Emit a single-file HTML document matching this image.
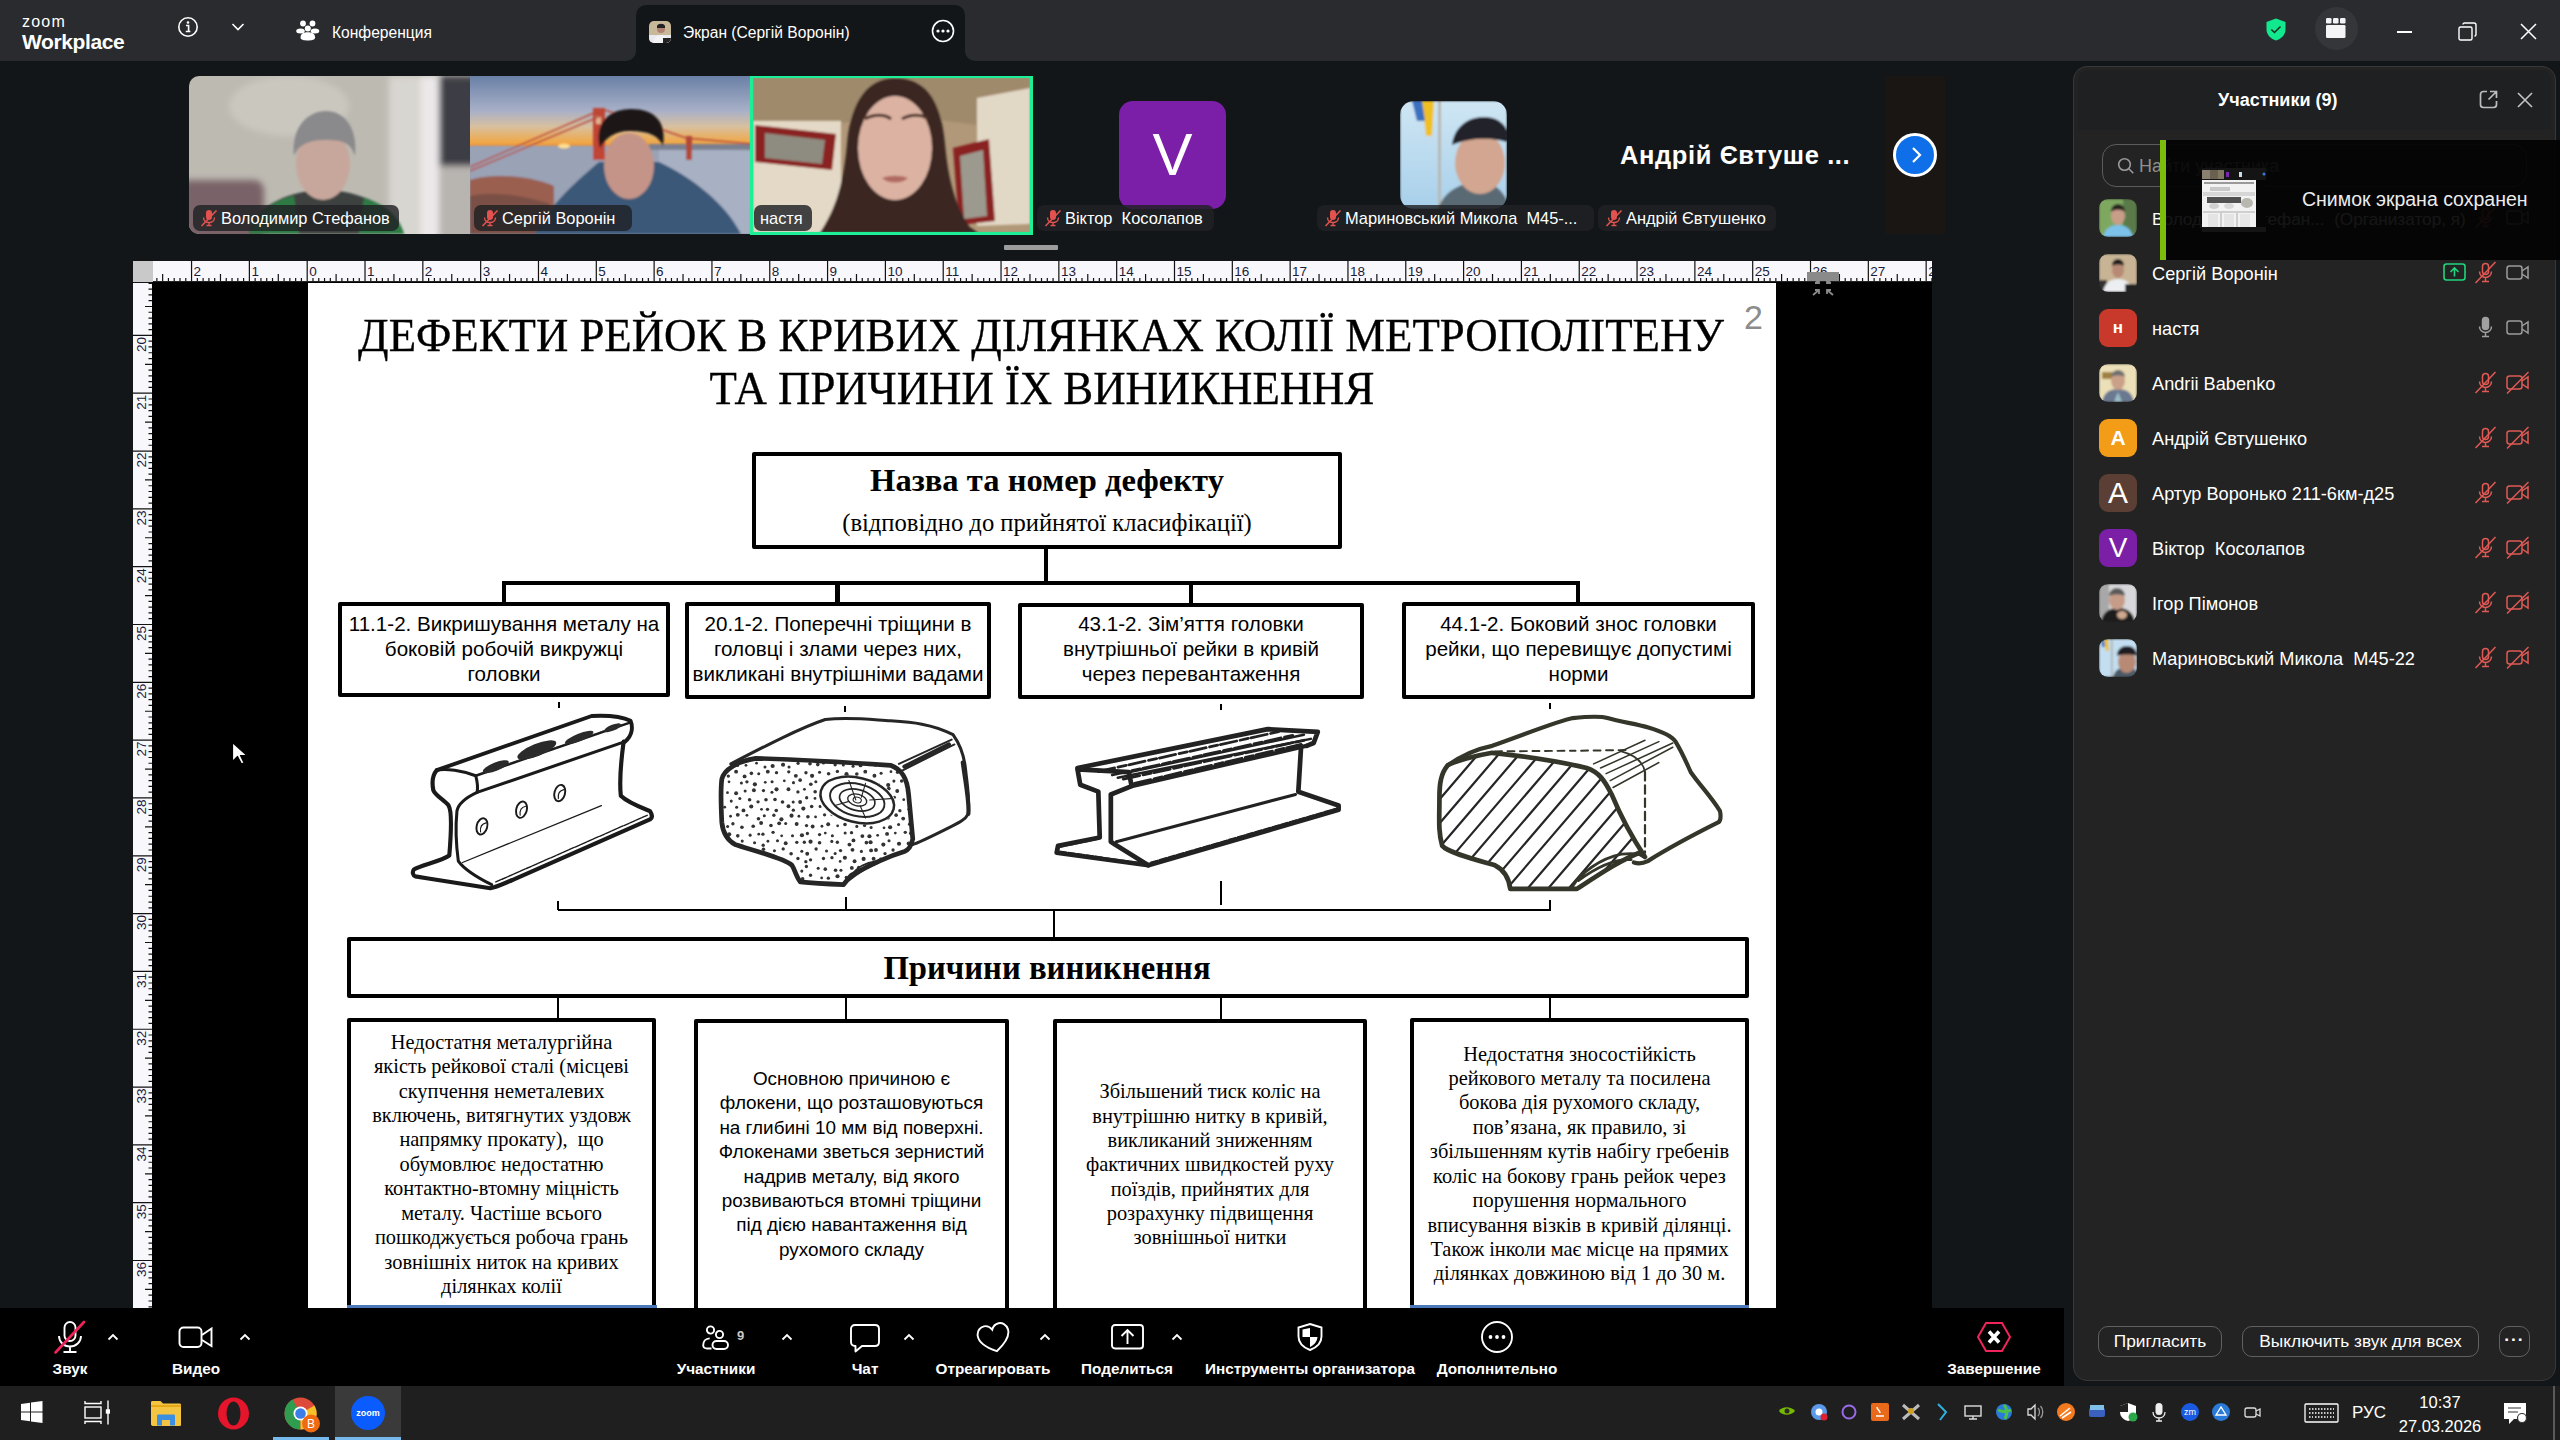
<!DOCTYPE html>
<html><head><meta charset="utf-8">
<style>
*{margin:0;padding:0;box-sizing:border-box}
html,body{width:2560px;height:1440px;overflow:hidden;background:#131619;font-family:"Liberation Sans",sans-serif;color:#fff}
.a{position:absolute}
#top{left:0;top:0;width:2560px;height:61px;background:#2a2b2e}
#tab2{left:636px;top:5px;width:329px;height:56px;background:#1e1f22;border-radius:10px 10px 0 0}
#doc{left:152px;top:282px;width:1780px;height:1026px;background:#000}
#page{left:308px;top:283px;width:1468px;height:1025px;background:#fff;overflow:hidden}
#hr{left:133px;top:261px;width:1799px;height:21px;background:#f8f7fc}
#vr{left:133px;top:283px;width:19px;height:1025px;background:#f8f7fc}
#corner{left:133px;top:261px;width:20px;height:21px;background:#c9c9c9}
#tool{left:0;top:1308px;width:2064px;height:78px;background:#000}
#task{left:0;top:1386px;width:2560px;height:54px;background:#1f1f1f}
#panel{left:2073px;top:66px;width:483px;height:1315px;background:#232323;border:1.5px solid #383838;border-radius:14px}
.serif{font-family:"Liberation Serif",serif;color:#000}
.box{position:absolute;border:4px solid #000;background:#fff;border-radius:2px}
.ln{position:absolute;background:#000}

.pill{height:26px;border-radius:7px;background:rgba(32,33,36,0.82);font:16.4px 'Liberation Sans';color:#fff;line-height:26px;padding-left:28px;white-space:nowrap;overflow:hidden}
.mm{position:absolute;left:7px;top:4px}
.btn{height:31px;border:1.5px solid #606060;border-radius:10px;font:17.3px 'Liberation Sans';color:#fff;text-align:center;line-height:28px;white-space:nowrap}
</style></head><body>

<div class="a" id="top"></div>
<!-- tab flare -->
<div class="a" style="left:626px;top:51px;width:10px;height:10px;background:#131619"></div>
<div class="a" style="left:626px;top:51px;width:10px;height:10px;background:#2a2b2e;border-radius:0 0 10px 0"></div>
<div class="a" style="left:965px;top:51px;width:10px;height:10px;background:#131619"></div>
<div class="a" style="left:965px;top:51px;width:10px;height:10px;background:#2a2b2e;border-radius:0 0 0 10px"></div>
<div class="a" style="left:636px;top:5px;width:329px;height:57px;background:#131619;border-radius:10px 10px 0 0"></div>
<!-- zoom logo -->
<div class="a" style="left:22px;top:13px;font:16px 'Liberation Sans';letter-spacing:1.2px;color:#fff">zoom</div>
<div class="a" style="left:22px;top:30px;font:bold 21px 'Liberation Sans';letter-spacing:-0.4px;color:#fff">Workplace</div>
<!-- info icon -->
<svg class="a" style="left:177px;top:16px" width="22" height="22" viewBox="0 0 22 22"><circle cx="11" cy="11" r="9.2" fill="none" stroke="#fff" stroke-width="1.6"/><circle cx="11" cy="6.5" r="1.3" fill="#fff"/><path d="M9 9.5h2.6v6M8.8 15.5h4.6" stroke="#fff" stroke-width="1.6" fill="none"/></svg>
<svg class="a" style="left:231px;top:22px" width="14" height="10" viewBox="0 0 14 10"><path d="M1.5 2l5.5 5.5L12.5 2" stroke="#fff" stroke-width="1.6" fill="none"/></svg>
<!-- people icon -->
<svg class="a" style="left:296px;top:19px" width="24" height="24" viewBox="0 0 24 24" fill="#fff"><circle cx="7" cy="4.5" r="2.9"/><circle cx="16.5" cy="4.5" r="2.9"/><circle cx="11.8" cy="9.5" r="3"/><ellipse cx="4.5" cy="12" rx="4.3" ry="2.5"/><ellipse cx="19" cy="12" rx="4.3" ry="2.5"/><path d="M4.5 18.5c0-4 3.5-5.2 7.3-5.2s7.3 1.2 7.3 5.2c0 2.2-3.2 3-7.3 3s-7.3-.8-7.3-3z"/></svg>
<div class="a" style="left:332px;top:24px;font:15.6px 'Liberation Sans';color:#fff">Конференция</div>
<!-- tab content -->
<svg class="a" style="left:649px;top:21px" width="22" height="22" viewBox="0 0 22 22"><defs><clipPath id="ct"><rect width="22" height="22" rx="5"/></clipPath></defs><g clip-path="url(#ct)"><rect width="22" height="22" fill="#c8b89a"/><rect y="14" width="22" height="8" fill="#e8e8ee"/><circle cx="12" cy="8" r="4" fill="#b08070"/><path d="M8 5c1-3 7-3 8 0v2H8z" fill="#222"/><path d="M4 22c1-6 5-8 8-8s7 2 8 8z" fill="#f2f2f4"/><rect x="14" y="17" width="8" height="5" fill="#222"/></g></svg>
<div class="a" style="left:683px;top:24px;font:15.6px 'Liberation Sans';color:#fff">Экран (Сергій Воронін)</div>
<svg class="a" style="left:931px;top:19px" width="24" height="24" viewBox="0 0 24 24"><circle cx="12" cy="12" r="10.5" fill="none" stroke="#fff" stroke-width="1.6"/><circle cx="7" cy="12" r="1.6" fill="#fff"/><circle cx="12" cy="12" r="1.6" fill="#fff"/><circle cx="17" cy="12" r="1.6" fill="#fff"/></svg>
<!-- right icons -->
<svg class="a" style="left:2265px;top:18px" width="22" height="23" viewBox="0 0 22 23"><path d="M11 0.5L20.5 4v7.5c0 5.5-4.5 9.5-9.5 11-5-1.5-9.5-5.5-9.5-11V4z" fill="#12e98e"/><path d="M6.3 11.5l3.2 3 6-6" stroke="#1d2a24" stroke-width="1.6" fill="none"/></svg>
<div class="a" style="left:2315px;top:7px;width:43px;height:43px;border-radius:50%;background:#35363a"></div>
<svg class="a" style="left:2325px;top:17px" width="22" height="22" viewBox="0 0 22 22" fill="#f4f4f6"><rect x="1" y="1" width="5.5" height="5.5" rx="1.3"/><rect x="8" y="1" width="5.5" height="5.5" rx="1.3"/><rect x="15" y="1" width="5.5" height="5.5" rx="1.3"/><rect x="1" y="8" width="19.5" height="13" rx="1.3"/></svg>
<div class="a" style="left:2397px;top:31px;width:15px;height:1.6px;background:#fff"></div>
<svg class="a" style="left:2458px;top:22px" width="19" height="19" viewBox="0 0 19 19"><rect x="1" y="5" width="13" height="13" rx="1.5" fill="none" stroke="#fff" stroke-width="1.4"/><path d="M5 2.5c0-1 .5-1.5 1.5-1.5h9.5c1 0 2 1 2 2v9.5c0 1-.5 1.5-1.5 1.5" fill="none" stroke="#fff" stroke-width="1.4"/></svg>
<svg class="a" style="left:2520px;top:23px" width="17" height="17" viewBox="0 0 17 17"><path d="M1 1l15 15M16 1L1 16" stroke="#fff" stroke-width="1.5"/></svg>


<!-- VIDEO STRIP -->
<svg class="a" style="left:189px;top:76px" width="844" height="159" viewBox="0 0 844 159">
<defs>
<clipPath id="c1"><path d="M10 0H281V158H10A10 10 0 0 1 0 148V10A10 10 0 0 1 10 0z"/></clipPath>
<clipPath id="c2"><rect x="281" y="0" width="281" height="158"/></clipPath>
<clipPath id="c3"><rect x="564" y="1" width="277" height="156"/></clipPath>
<filter id="bl"><feGaussianBlur stdDeviation="3"/></filter>
<filter id="bl2"><feGaussianBlur stdDeviation="1.2"/></filter>
<linearGradient id="sky" x1="0" y1="0" x2="0" y2="1"><stop offset="0" stop-color="#6a80a6"/><stop offset="0.22" stop-color="#a8b0c8"/><stop offset="0.32" stop-color="#d8c0a0"/><stop offset="0.42" stop-color="#f0a848"/><stop offset="0.445" stop-color="#e89040"/><stop offset="0.45" stop-color="#9aa2b6"/><stop offset="1" stop-color="#8a98b0"/></linearGradient>
</defs>
<g clip-path="url(#c1)">
 <rect width="281" height="158" fill="#bdbab2"/>
 <g filter="url(#bl)">
  <rect x="-10" y="104" width="85" height="70" rx="10" fill="#7a6468"/>
  <rect x="200" y="0" width="45" height="170" fill="#d8d6d0"/>
  <rect x="232" y="0" width="18" height="170" fill="#ece8ea"/>
  <rect x="250" y="0" width="40" height="90" fill="#3c3c44"/>
  <rect x="250" y="90" width="40" height="80" fill="#b8b4b0"/>
  <ellipse cx="100" cy="30" rx="60" ry="30" fill="#cac7bf"/>
 </g>
 <g filter="url(#bl2)">
  <path d="M60 158c6-30 40-42 75-45c35 3 70 15 80 45z" fill="#3e4240"/>
  <path d="M60 158c8-25 30-35 45-38l5 38z" fill="#2f7a45"/>
  <path d="M215 158c-6-22-25-32-40-36l-5 36z" fill="#2f7a45"/>
  <ellipse cx="134" cy="88" rx="27" ry="36" fill="#c7a79b"/>
  <path d="M105 80c-3-30 15-45 32-45s32 15 29 45c-4-12-10-16-29-16s-28 6-32 16z" fill="#8a8a8c"/>
 </g>
</g>
<g clip-path="url(#c2)">
 <rect x="281" y="0" width="281" height="158" fill="url(#sky)"/>
 <g filter="url(#bl2)">
  <rect x="281" y="70" width="281" height="88" fill="#9aa2b6"/>
  <rect x="470" y="72" width="92" height="86" fill="#a8b0c4"/>
  <rect x="460" y="68" width="102" height="6" fill="#7a8090"/>
  <ellipse cx="375" cy="70" rx="6" ry="2.5" fill="#ffe090"/>
  <path d="M281 104c20-6 55-6 84 6v48h-84z" fill="#9a5e50"/>
  <path d="M281 120c20-4 50-2 80 8v30h-80z" fill="#7a5044"/>
  <rect x="404" y="32" width="12" height="52" fill="#c04434"/>
  <rect x="407" y="40" width="5" height="8" fill="#e0b090"/>
  <rect x="497" y="60" width="6" height="24" fill="#b04838"/>
  <path d="M281 91L414 33M281 95L414 39M416 34L497 62L562 68" stroke="#b84a3a" stroke-width="1.4" fill="none"/>
  <path d="M346 158c14-28 40-52 64-72h60c30 14 65 39 82 72z" fill="#3b5878"/>
  <ellipse cx="440" cy="90" rx="25" ry="33" fill="#c49488"/>
  <path d="M411 72c-6-25 9-39 31-39c23 0 36 12 32 37c-4-10-14-15-33-15c-15 0-25 7-30 17z" fill="#1c1818"/>
 </g>
</g>
<g clip-path="url(#c3)">
 <rect x="564" y="0" width="277" height="158" fill="#b09878"/>
 <g filter="url(#bl2)">
  <path d="M564 0h277v60c-60-15-140-25-200-10l-77 5z" fill="#a08a6c"/>
  <rect x="564" y="45" width="88" height="113" fill="#e4d9c6"/>
  <path d="M566 49l81 9l-4 36l-77-8z" fill="#8a2222"/>
  <path d="M576 57l60 7l-3 24l-57-6z" fill="#8e8c80"/>
  <path d="M788 22l53-10v136l-53 2z" fill="#e2d8c6"/>
  <path d="M764 72l36-9l6 82l-36 4z" fill="#8a2424"/>
  <path d="M771 80l23-6l4 66l-23 3z" fill="#9c9a8e"/>
  <path d="M640 158c20-22 45-32 66-32c25 0 60 12 84 32z" fill="#2a1f1e"/>
  <path d="M630 158c14-20 24-45 28-90c4-45 22-66 48-66c28 0 46 18 50 66c4 45 14 70 30 90z" fill="#3a2822"/>
  <ellipse cx="706" cy="72" rx="37" ry="52" fill="#dcb2a2"/>
  <path d="M676 43c8-5 20-5 26 0M713 43c8-5 20-5 26 0" stroke="#4a3028" stroke-width="3" fill="none"/>
  <path d="M693 102c8-3 18-3 26 0c-6 6-20 6-26 0z" fill="#b06a62"/>
 </g>
</g>
<rect x="562.5" y="0.5" width="280" height="157" fill="none" stroke="#1cef96" stroke-width="3.2"/>
</svg>
<!-- name pills -->
<div class="a pill" style="left:193px;top:205px;width:206px"><svg class="mm" width="18" height="18" viewBox="0 0 18 18"><rect x="6" y="1" width="6" height="10" rx="3" fill="#e2524f"/><path d="M3.5 8.5c0 3 2.5 5 5.5 5s5.5-2 5.5-5M9 13.5v3M6.5 16.5h5" stroke="#e2524f" stroke-width="1.4" fill="none"/><path d="M1.5 17L16.5 1.5" stroke="#e2524f" stroke-width="1.6"/></svg><span>Володимир Стефанов</span></div>
<div class="a pill" style="left:474px;top:205px;width:158px"><svg class="mm" width="18" height="18" viewBox="0 0 18 18"><rect x="6" y="1" width="6" height="10" rx="3" fill="#e2524f"/><path d="M3.5 8.5c0 3 2.5 5 5.5 5s5.5-2 5.5-5M9 13.5v3M6.5 16.5h5" stroke="#e2524f" stroke-width="1.4" fill="none"/><path d="M1.5 17L16.5 1.5" stroke="#e2524f" stroke-width="1.6"/></svg><span>Сергій Воронін</span></div>
<div class="a pill" style="left:754px;top:205px;width:58px;padding-left:6px"><span>настя</span></div>
<div class="a" style="left:1119px;top:101px;width:107px;height:108px;border-radius:14px;background:#7b1fa8;font:60px 'Liberation Sans';color:#fff;text-align:center;line-height:108px">V</div>
<svg class="a" style="left:1400px;top:101px" width="107" height="108" viewBox="0 0 107 108">
<defs><clipPath id="c4"><rect width="107" height="108" rx="14"/></clipPath><linearGradient id="sk2" x1="0" y1="0" x2="0" y2="1"><stop offset="0" stop-color="#cfe6f4"/><stop offset="1" stop-color="#a8d0ea"/></linearGradient></defs>
<g clip-path="url(#c4)" filter="url(#bl2)">
<rect width="107" height="108" fill="url(#sk2)"/>
<path d="M22 0l12 0l-2 35l-6 0z" fill="#f0c020"/><path d="M12 0h10l3 20h-8z" fill="#3a70c0"/>
<rect x="38" y="0" width="3" height="108" fill="#b8b8b0"/>
<path d="M38 108c6-18 22-26 42-28c15 2 25 10 30 28z" fill="#5a6a74"/>
<ellipse cx="80" cy="62" rx="25" ry="31" fill="#d2a690"/>
<path d="M52 44c2-18 16-28 32-28c16 0 26 10 25 26c-12-5-36-7-57 2z" fill="#23232a"/>
</g></svg>
<div class="a pill" style="left:1037px;top:205px;width:177px"><svg class="mm" width="18" height="18" viewBox="0 0 18 18"><rect x="6" y="1" width="6" height="10" rx="3" fill="#e2524f"/><path d="M3.5 8.5c0 3 2.5 5 5.5 5s5.5-2 5.5-5M9 13.5v3M6.5 16.5h5" stroke="#e2524f" stroke-width="1.4" fill="none"/><path d="M1.5 17L16.5 1.5" stroke="#e2524f" stroke-width="1.6"/></svg><span>Віктор&nbsp; Косолапов</span></div>
<div class="a pill" style="left:1317px;top:205px;width:277px"><svg class="mm" width="18" height="18" viewBox="0 0 18 18"><rect x="6" y="1" width="6" height="10" rx="3" fill="#e2524f"/><path d="M3.5 8.5c0 3 2.5 5 5.5 5s5.5-2 5.5-5M9 13.5v3M6.5 16.5h5" stroke="#e2524f" stroke-width="1.4" fill="none"/><path d="M1.5 17L16.5 1.5" stroke="#e2524f" stroke-width="1.6"/></svg><span>Мариновський Микола&nbsp; М45-...</span></div>
<div class="a pill" style="left:1598px;top:205px;width:178px"><svg class="mm" width="18" height="18" viewBox="0 0 18 18"><rect x="6" y="1" width="6" height="10" rx="3" fill="#e2524f"/><path d="M3.5 8.5c0 3 2.5 5 5.5 5s5.5-2 5.5-5M9 13.5v3M6.5 16.5h5" stroke="#e2524f" stroke-width="1.4" fill="none"/><path d="M1.5 17L16.5 1.5" stroke="#e2524f" stroke-width="1.6"/></svg><span>Андрій Євтушенко</span></div>
<div class="a" style="left:1620px;top:141px;font:bold 25.5px 'Liberation Sans';color:#fff;letter-spacing:0.6px">Андрій Євтуше&nbsp;...</div>
<div class="a" style="left:1885px;top:76px;width:60px;height:158px;background:#1a1613"></div>
<div class="a" style="left:1893px;top:133px;width:44px;height:44px;border-radius:50%;background:#0e6fe8;border:3.5px solid #fff"></div>
<svg class="a" style="left:1906px;top:145px" width="20" height="20" viewBox="0 0 20 20"><path d="M7 3l7 7l-7 7" stroke="#fff" stroke-width="2.2" fill="none"/></svg>
<div class="a" style="left:1004px;top:245px;width:54px;height:5px;background:#9c9c9c;border-radius:1px"></div>
<div class="a" id="doc"></div>
<div class="a" id="hr"></div><div class="a" id="vr"></div><div class="a" id="corner"></div>
<svg class="a" style="left:153px;top:261px" width="1779" height="21" viewBox="0 0 1779 21"><path d="M3.87 17V20.5 M9.65 13V20.5 M15.43 17V20.5 M21.21 17V20.5 M27.00 17V20.5 M32.78 17V20.5 M38.56 0V21 M44.34 17V20.5 M50.12 17V20.5 M55.91 17V20.5 M61.69 17V20.5 M67.47 13V20.5 M73.25 17V20.5 M79.03 17V20.5 M84.82 17V20.5 M90.60 17V20.5 M96.38 0V21 M102.16 17V20.5 M107.94 17V20.5 M113.73 17V20.5 M119.51 17V20.5 M125.29 13V20.5 M131.07 17V20.5 M136.85 17V20.5 M142.64 17V20.5 M148.42 17V20.5 M154.20 0V21 M159.98 17V20.5 M165.76 17V20.5 M171.55 17V20.5 M177.33 17V20.5 M183.11 13V20.5 M188.89 17V20.5 M194.67 17V20.5 M200.46 17V20.5 M206.24 17V20.5 M212.02 0V21 M217.80 17V20.5 M223.58 17V20.5 M229.37 17V20.5 M235.15 17V20.5 M240.93 13V20.5 M246.71 17V20.5 M252.49 17V20.5 M258.28 17V20.5 M264.06 17V20.5 M269.84 0V21 M275.62 17V20.5 M281.40 17V20.5 M287.19 17V20.5 M292.97 17V20.5 M298.75 13V20.5 M304.53 17V20.5 M310.31 17V20.5 M316.10 17V20.5 M321.88 17V20.5 M327.66 0V21 M333.44 17V20.5 M339.22 17V20.5 M345.01 17V20.5 M350.79 17V20.5 M356.57 13V20.5 M362.35 17V20.5 M368.13 17V20.5 M373.92 17V20.5 M379.70 17V20.5 M385.48 0V21 M391.26 17V20.5 M397.04 17V20.5 M402.83 17V20.5 M408.61 17V20.5 M414.39 13V20.5 M420.17 17V20.5 M425.95 17V20.5 M431.74 17V20.5 M437.52 17V20.5 M443.30 0V21 M449.08 17V20.5 M454.86 17V20.5 M460.65 17V20.5 M466.43 17V20.5 M472.21 13V20.5 M477.99 17V20.5 M483.77 17V20.5 M489.56 17V20.5 M495.34 17V20.5 M501.12 0V21 M506.90 17V20.5 M512.68 17V20.5 M518.47 17V20.5 M524.25 17V20.5 M530.03 13V20.5 M535.81 17V20.5 M541.59 17V20.5 M547.38 17V20.5 M553.16 17V20.5 M558.94 0V21 M564.72 17V20.5 M570.50 17V20.5 M576.29 17V20.5 M582.07 17V20.5 M587.85 13V20.5 M593.63 17V20.5 M599.41 17V20.5 M605.20 17V20.5 M610.98 17V20.5 M616.76 0V21 M622.54 17V20.5 M628.32 17V20.5 M634.11 17V20.5 M639.89 17V20.5 M645.67 13V20.5 M651.45 17V20.5 M657.23 17V20.5 M663.02 17V20.5 M668.80 17V20.5 M674.58 0V21 M680.36 17V20.5 M686.14 17V20.5 M691.93 17V20.5 M697.71 17V20.5 M703.49 13V20.5 M709.27 17V20.5 M715.05 17V20.5 M720.84 17V20.5 M726.62 17V20.5 M732.40 0V21 M738.18 17V20.5 M743.96 17V20.5 M749.75 17V20.5 M755.53 17V20.5 M761.31 13V20.5 M767.09 17V20.5 M772.87 17V20.5 M778.66 17V20.5 M784.44 17V20.5 M790.22 0V21 M796.00 17V20.5 M801.78 17V20.5 M807.57 17V20.5 M813.35 17V20.5 M819.13 13V20.5 M824.91 17V20.5 M830.69 17V20.5 M836.48 17V20.5 M842.26 17V20.5 M848.04 0V21 M853.82 17V20.5 M859.60 17V20.5 M865.39 17V20.5 M871.17 17V20.5 M876.95 13V20.5 M882.73 17V20.5 M888.51 17V20.5 M894.30 17V20.5 M900.08 17V20.5 M905.86 0V21 M911.64 17V20.5 M917.42 17V20.5 M923.21 17V20.5 M928.99 17V20.5 M934.77 13V20.5 M940.55 17V20.5 M946.33 17V20.5 M952.12 17V20.5 M957.90 17V20.5 M963.68 0V21 M969.46 17V20.5 M975.24 17V20.5 M981.03 17V20.5 M986.81 17V20.5 M992.59 13V20.5 M998.37 17V20.5 M1004.15 17V20.5 M1009.94 17V20.5 M1015.72 17V20.5 M1021.50 0V21 M1027.28 17V20.5 M1033.06 17V20.5 M1038.85 17V20.5 M1044.63 17V20.5 M1050.41 13V20.5 M1056.19 17V20.5 M1061.97 17V20.5 M1067.76 17V20.5 M1073.54 17V20.5 M1079.32 0V21 M1085.10 17V20.5 M1090.88 17V20.5 M1096.67 17V20.5 M1102.45 17V20.5 M1108.23 13V20.5 M1114.01 17V20.5 M1119.79 17V20.5 M1125.58 17V20.5 M1131.36 17V20.5 M1137.14 0V21 M1142.92 17V20.5 M1148.70 17V20.5 M1154.49 17V20.5 M1160.27 17V20.5 M1166.05 13V20.5 M1171.83 17V20.5 M1177.61 17V20.5 M1183.40 17V20.5 M1189.18 17V20.5 M1194.96 0V21 M1200.74 17V20.5 M1206.52 17V20.5 M1212.31 17V20.5 M1218.09 17V20.5 M1223.87 13V20.5 M1229.65 17V20.5 M1235.43 17V20.5 M1241.22 17V20.5 M1247.00 17V20.5 M1252.78 0V21 M1258.56 17V20.5 M1264.34 17V20.5 M1270.13 17V20.5 M1275.91 17V20.5 M1281.69 13V20.5 M1287.47 17V20.5 M1293.25 17V20.5 M1299.04 17V20.5 M1304.82 17V20.5 M1310.60 0V21 M1316.38 17V20.5 M1322.16 17V20.5 M1327.95 17V20.5 M1333.73 17V20.5 M1339.51 13V20.5 M1345.29 17V20.5 M1351.07 17V20.5 M1356.86 17V20.5 M1362.64 17V20.5 M1368.42 0V21 M1374.20 17V20.5 M1379.98 17V20.5 M1385.77 17V20.5 M1391.55 17V20.5 M1397.33 13V20.5 M1403.11 17V20.5 M1408.89 17V20.5 M1414.68 17V20.5 M1420.46 17V20.5 M1426.24 0V21 M1432.02 17V20.5 M1437.80 17V20.5 M1443.59 17V20.5 M1449.37 17V20.5 M1455.15 13V20.5 M1460.93 17V20.5 M1466.71 17V20.5 M1472.50 17V20.5 M1478.28 17V20.5 M1484.06 0V21 M1489.84 17V20.5 M1495.62 17V20.5 M1501.41 17V20.5 M1507.19 17V20.5 M1512.97 13V20.5 M1518.75 17V20.5 M1524.53 17V20.5 M1530.32 17V20.5 M1536.10 17V20.5 M1541.88 0V21 M1547.66 17V20.5 M1553.44 17V20.5 M1559.23 17V20.5 M1565.01 17V20.5 M1570.79 13V20.5 M1576.57 17V20.5 M1582.35 17V20.5 M1588.14 17V20.5 M1593.92 17V20.5 M1599.70 0V21 M1605.48 17V20.5 M1611.26 17V20.5 M1617.05 17V20.5 M1622.83 17V20.5 M1628.61 13V20.5 M1634.39 17V20.5 M1640.17 17V20.5 M1645.96 17V20.5 M1651.74 17V20.5 M1657.52 0V21 M1663.30 17V20.5 M1669.08 17V20.5 M1674.87 17V20.5 M1680.65 17V20.5 M1686.43 13V20.5 M1692.21 17V20.5 M1697.99 17V20.5 M1703.78 17V20.5 M1709.56 17V20.5 M1715.34 0V21 M1721.12 17V20.5 M1726.90 17V20.5 M1732.69 17V20.5 M1738.47 17V20.5 M1744.25 13V20.5 M1750.03 17V20.5 M1755.81 17V20.5 M1761.60 17V20.5 M1767.38 17V20.5 M1773.16 0V21 M1778.94 17V20.5" stroke="#111" stroke-width="1.2" fill="none"/><text x="40.6" y="14.5" font-family="Liberation Sans" font-size="13.5" fill="#1b1b3a">2</text><text x="98.4" y="14.5" font-family="Liberation Sans" font-size="13.5" fill="#1b1b3a">1</text><text x="156.2" y="14.5" font-family="Liberation Sans" font-size="13.5" fill="#1b1b3a">0</text><text x="214.0" y="14.5" font-family="Liberation Sans" font-size="13.5" fill="#1b1b3a">1</text><text x="271.8" y="14.5" font-family="Liberation Sans" font-size="13.5" fill="#1b1b3a">2</text><text x="329.7" y="14.5" font-family="Liberation Sans" font-size="13.5" fill="#1b1b3a">3</text><text x="387.5" y="14.5" font-family="Liberation Sans" font-size="13.5" fill="#1b1b3a">4</text><text x="445.3" y="14.5" font-family="Liberation Sans" font-size="13.5" fill="#1b1b3a">5</text><text x="503.1" y="14.5" font-family="Liberation Sans" font-size="13.5" fill="#1b1b3a">6</text><text x="560.9" y="14.5" font-family="Liberation Sans" font-size="13.5" fill="#1b1b3a">7</text><text x="618.8" y="14.5" font-family="Liberation Sans" font-size="13.5" fill="#1b1b3a">8</text><text x="676.6" y="14.5" font-family="Liberation Sans" font-size="13.5" fill="#1b1b3a">9</text><text x="734.4" y="14.5" font-family="Liberation Sans" font-size="13.5" fill="#1b1b3a">10</text><text x="792.2" y="14.5" font-family="Liberation Sans" font-size="13.5" fill="#1b1b3a">11</text><text x="850.0" y="14.5" font-family="Liberation Sans" font-size="13.5" fill="#1b1b3a">12</text><text x="907.9" y="14.5" font-family="Liberation Sans" font-size="13.5" fill="#1b1b3a">13</text><text x="965.7" y="14.5" font-family="Liberation Sans" font-size="13.5" fill="#1b1b3a">14</text><text x="1023.5" y="14.5" font-family="Liberation Sans" font-size="13.5" fill="#1b1b3a">15</text><text x="1081.3" y="14.5" font-family="Liberation Sans" font-size="13.5" fill="#1b1b3a">16</text><text x="1139.1" y="14.5" font-family="Liberation Sans" font-size="13.5" fill="#1b1b3a">17</text><text x="1197.0" y="14.5" font-family="Liberation Sans" font-size="13.5" fill="#1b1b3a">18</text><text x="1254.8" y="14.5" font-family="Liberation Sans" font-size="13.5" fill="#1b1b3a">19</text><text x="1312.6" y="14.5" font-family="Liberation Sans" font-size="13.5" fill="#1b1b3a">20</text><text x="1370.4" y="14.5" font-family="Liberation Sans" font-size="13.5" fill="#1b1b3a">21</text><text x="1428.2" y="14.5" font-family="Liberation Sans" font-size="13.5" fill="#1b1b3a">22</text><text x="1486.1" y="14.5" font-family="Liberation Sans" font-size="13.5" fill="#1b1b3a">23</text><text x="1543.9" y="14.5" font-family="Liberation Sans" font-size="13.5" fill="#1b1b3a">24</text><text x="1601.7" y="14.5" font-family="Liberation Sans" font-size="13.5" fill="#1b1b3a">25</text><text x="1659.5" y="14.5" font-family="Liberation Sans" font-size="13.5" fill="#1b1b3a">26</text><text x="1717.3" y="14.5" font-family="Liberation Sans" font-size="13.5" fill="#1b1b3a">27</text><text x="1775.2" y="14.5" font-family="Liberation Sans" font-size="13.5" fill="#1b1b3a">28</text><rect x="0" y="20" width="1779" height="1.2" fill="#222"/></svg>
<svg class="a" style="left:133px;top:283px" width="20" height="1025" viewBox="0 0 20 1025"><path d="M15.5 0.36H19 M15.5 6.14H19 M15.5 11.93H19 M15.5 17.71H19 M12 23.49H19 M15.5 29.27H19 M15.5 35.05H19 M15.5 40.84H19 M15.5 46.62H19 M0 52.40H19 M15.5 58.18H19 M15.5 63.96H19 M15.5 69.75H19 M15.5 75.53H19 M12 81.31H19 M15.5 87.09H19 M15.5 92.87H19 M15.5 98.66H19 M15.5 104.44H19 M0 110.22H19 M15.5 116.00H19 M15.5 121.78H19 M15.5 127.57H19 M15.5 133.35H19 M12 139.13H19 M15.5 144.91H19 M15.5 150.69H19 M15.5 156.48H19 M15.5 162.26H19 M0 168.04H19 M15.5 173.82H19 M15.5 179.60H19 M15.5 185.39H19 M15.5 191.17H19 M12 196.95H19 M15.5 202.73H19 M15.5 208.51H19 M15.5 214.30H19 M15.5 220.08H19 M0 225.86H19 M15.5 231.64H19 M15.5 237.42H19 M15.5 243.21H19 M15.5 248.99H19 M12 254.77H19 M15.5 260.55H19 M15.5 266.33H19 M15.5 272.12H19 M15.5 277.90H19 M0 283.68H19 M15.5 289.46H19 M15.5 295.24H19 M15.5 301.03H19 M15.5 306.81H19 M12 312.59H19 M15.5 318.37H19 M15.5 324.15H19 M15.5 329.94H19 M15.5 335.72H19 M0 341.50H19 M15.5 347.28H19 M15.5 353.06H19 M15.5 358.85H19 M15.5 364.63H19 M12 370.41H19 M15.5 376.19H19 M15.5 381.97H19 M15.5 387.76H19 M15.5 393.54H19 M0 399.32H19 M15.5 405.10H19 M15.5 410.88H19 M15.5 416.67H19 M15.5 422.45H19 M12 428.23H19 M15.5 434.01H19 M15.5 439.79H19 M15.5 445.58H19 M15.5 451.36H19 M0 457.14H19 M15.5 462.92H19 M15.5 468.70H19 M15.5 474.49H19 M15.5 480.27H19 M12 486.05H19 M15.5 491.83H19 M15.5 497.61H19 M15.5 503.40H19 M15.5 509.18H19 M0 514.96H19 M15.5 520.74H19 M15.5 526.52H19 M15.5 532.31H19 M15.5 538.09H19 M12 543.87H19 M15.5 549.65H19 M15.5 555.43H19 M15.5 561.22H19 M15.5 567.00H19 M0 572.78H19 M15.5 578.56H19 M15.5 584.34H19 M15.5 590.13H19 M15.5 595.91H19 M12 601.69H19 M15.5 607.47H19 M15.5 613.25H19 M15.5 619.04H19 M15.5 624.82H19 M0 630.60H19 M15.5 636.38H19 M15.5 642.16H19 M15.5 647.95H19 M15.5 653.73H19 M12 659.51H19 M15.5 665.29H19 M15.5 671.07H19 M15.5 676.86H19 M15.5 682.64H19 M0 688.42H19 M15.5 694.20H19 M15.5 699.98H19 M15.5 705.77H19 M15.5 711.55H19 M12 717.33H19 M15.5 723.11H19 M15.5 728.89H19 M15.5 734.68H19 M15.5 740.46H19 M0 746.24H19 M15.5 752.02H19 M15.5 757.80H19 M15.5 763.59H19 M15.5 769.37H19 M12 775.15H19 M15.5 780.93H19 M15.5 786.71H19 M15.5 792.50H19 M15.5 798.28H19 M0 804.06H19 M15.5 809.84H19 M15.5 815.62H19 M15.5 821.41H19 M15.5 827.19H19 M12 832.97H19 M15.5 838.75H19 M15.5 844.53H19 M15.5 850.32H19 M15.5 856.10H19 M0 861.88H19 M15.5 867.66H19 M15.5 873.44H19 M15.5 879.23H19 M15.5 885.01H19 M12 890.79H19 M15.5 896.57H19 M15.5 902.35H19 M15.5 908.14H19 M15.5 913.92H19 M0 919.70H19 M15.5 925.48H19 M15.5 931.26H19 M15.5 937.05H19 M15.5 942.83H19 M12 948.61H19 M15.5 954.39H19 M15.5 960.17H19 M15.5 965.96H19 M15.5 971.74H19 M0 977.52H19 M15.5 983.30H19 M15.5 989.08H19 M15.5 994.87H19 M15.5 1000.65H19 M12 1006.43H19 M15.5 1012.21H19 M15.5 1017.99H19 M15.5 1023.78H19" stroke="#111" stroke-width="1.2" fill="none"/><text transform="translate(13 68.9) rotate(-90)" font-family="Liberation Sans" font-size="13.5" fill="#1b1b3a">20</text><text transform="translate(13 126.7) rotate(-90)" font-family="Liberation Sans" font-size="13.5" fill="#1b1b3a">21</text><text transform="translate(13 184.5) rotate(-90)" font-family="Liberation Sans" font-size="13.5" fill="#1b1b3a">22</text><text transform="translate(13 242.4) rotate(-90)" font-family="Liberation Sans" font-size="13.5" fill="#1b1b3a">23</text><text transform="translate(13 300.2) rotate(-90)" font-family="Liberation Sans" font-size="13.5" fill="#1b1b3a">24</text><text transform="translate(13 358.0) rotate(-90)" font-family="Liberation Sans" font-size="13.5" fill="#1b1b3a">25</text><text transform="translate(13 415.8) rotate(-90)" font-family="Liberation Sans" font-size="13.5" fill="#1b1b3a">26</text><text transform="translate(13 473.6) rotate(-90)" font-family="Liberation Sans" font-size="13.5" fill="#1b1b3a">27</text><text transform="translate(13 531.5) rotate(-90)" font-family="Liberation Sans" font-size="13.5" fill="#1b1b3a">28</text><text transform="translate(13 589.3) rotate(-90)" font-family="Liberation Sans" font-size="13.5" fill="#1b1b3a">29</text><text transform="translate(13 647.1) rotate(-90)" font-family="Liberation Sans" font-size="13.5" fill="#1b1b3a">30</text><text transform="translate(13 704.9) rotate(-90)" font-family="Liberation Sans" font-size="13.5" fill="#1b1b3a">31</text><text transform="translate(13 762.7) rotate(-90)" font-family="Liberation Sans" font-size="13.5" fill="#1b1b3a">32</text><text transform="translate(13 820.6) rotate(-90)" font-family="Liberation Sans" font-size="13.5" fill="#1b1b3a">33</text><text transform="translate(13 878.4) rotate(-90)" font-family="Liberation Sans" font-size="13.5" fill="#1b1b3a">34</text><text transform="translate(13 936.2) rotate(-90)" font-family="Liberation Sans" font-size="13.5" fill="#1b1b3a">35</text><text transform="translate(13 994.0) rotate(-90)" font-family="Liberation Sans" font-size="13.5" fill="#1b1b3a">36</text></svg>
<div class="a" id="page"></div>
<div class="a" style="left:41px;top:313.1px;width:2000px;text-align:center;font-family:'Liberation Serif';font-size:45.5px;line-height:45.5px;font-weight:normal;color:#000;white-space:nowrap;-webkit-text-stroke:0.35px #000"><span style="display:inline-block;transform:scaleX(0.984);transform-origin:50% 50%">ДЕФЕКТИ РЕЙОК В КРИВИХ ДІЛЯНКАХ КОЛІЇ МЕТРОПОЛІТЕНУ</span></div>
<div class="a" style="left:42px;top:366.3px;width:2000px;text-align:center;font-family:'Liberation Serif';font-size:45.5px;line-height:45.5px;font-weight:normal;color:#000;white-space:nowrap;-webkit-text-stroke:0.35px #000"><span style="display:inline-block;transform:scaleX(0.984);transform-origin:50% 50%">ТА ПРИЧИНИ ЇХ ВИНИКНЕННЯ</span></div>
<div class="a" style="left:1744px;top:298px;font:34px 'Liberation Sans';color:#8c8c8c">2</div>
<div class="box" style="left:752px;top:452px;width:590px;height:97px;border-width:4.5px"></div>
<div class="a" style="left:47px;top:463.7px;width:2000px;text-align:center;font-family:'Liberation Serif';font-size:32.6px;line-height:32.6px;font-weight:bold;color:#000;white-space:nowrap;-webkit-text-stroke:0px #000"><span style="display:inline-block;transform:scaleX(1.0);transform-origin:50% 50%">Назва та номер дефекту</span></div>
<div class="a" style="left:47px;top:511.4px;width:2000px;text-align:center;font-family:'Liberation Serif';font-size:24.6px;line-height:24.6px;font-weight:normal;color:#000;white-space:nowrap;-webkit-text-stroke:0px #000"><span style="display:inline-block;transform:scaleX(1.0);transform-origin:50% 50%">(відповідно до прийнятої класифікації)</span></div>
<div class="ln" style="left:1043.8px;top:548px;width:4.5px;height:37px"></div>
<div class="ln" style="left:502px;top:580.8px;width:1078px;height:4.5px"></div>
<div class="ln" style="left:501.8px;top:581px;width:4.5px;height:23px"></div>
<div class="ln" style="left:835.2px;top:581px;width:4.5px;height:23px"></div>
<div class="ln" style="left:1188.8px;top:581px;width:4.5px;height:23px"></div>
<div class="ln" style="left:1575.8px;top:581px;width:4.5px;height:23px"></div>
<div class="box" style="left:338px;top:602px;width:332px;height:95px;border-width:4.5px"></div>
<div class="a" style="left:-496.0px;top:614.1px;width:2000px;text-align:center;font-family:'Liberation Sans';font-size:20.6px;line-height:20.6px;font-weight:normal;color:#000;white-space:nowrap;-webkit-text-stroke:0px #000"><span style="display:inline-block;transform:scaleX(1.0);transform-origin:50% 50%">11.1-2. Викришування металу на</span></div>
<div class="a" style="left:-496.0px;top:638.9px;width:2000px;text-align:center;font-family:'Liberation Sans';font-size:20.6px;line-height:20.6px;font-weight:normal;color:#000;white-space:nowrap;-webkit-text-stroke:0px #000"><span style="display:inline-block;transform:scaleX(1.0);transform-origin:50% 50%">боковій робочій викружці</span></div>
<div class="a" style="left:-496.0px;top:663.7px;width:2000px;text-align:center;font-family:'Liberation Sans';font-size:20.6px;line-height:20.6px;font-weight:normal;color:#000;white-space:nowrap;-webkit-text-stroke:0px #000"><span style="display:inline-block;transform:scaleX(1.0);transform-origin:50% 50%">головки</span></div>
<div class="box" style="left:685px;top:602px;width:306px;height:97px;border-width:4.5px"></div>
<div class="a" style="left:-162.0px;top:614.1px;width:2000px;text-align:center;font-family:'Liberation Sans';font-size:20.6px;line-height:20.6px;font-weight:normal;color:#000;white-space:nowrap;-webkit-text-stroke:0px #000"><span style="display:inline-block;transform:scaleX(1.0);transform-origin:50% 50%">20.1-2. Поперечні тріщини в</span></div>
<div class="a" style="left:-162.0px;top:638.9px;width:2000px;text-align:center;font-family:'Liberation Sans';font-size:20.6px;line-height:20.6px;font-weight:normal;color:#000;white-space:nowrap;-webkit-text-stroke:0px #000"><span style="display:inline-block;transform:scaleX(1.0);transform-origin:50% 50%">головці і злами через них,</span></div>
<div class="a" style="left:-162.0px;top:663.7px;width:2000px;text-align:center;font-family:'Liberation Sans';font-size:20.6px;line-height:20.6px;font-weight:normal;color:#000;white-space:nowrap;-webkit-text-stroke:0px #000"><span style="display:inline-block;transform:scaleX(1.0);transform-origin:50% 50%">викликані внутрішніми вадами</span></div>
<div class="box" style="left:1018px;top:603px;width:346px;height:96px;border-width:4.5px"></div>
<div class="a" style="left:191.0px;top:614.1px;width:2000px;text-align:center;font-family:'Liberation Sans';font-size:20.6px;line-height:20.6px;font-weight:normal;color:#000;white-space:nowrap;-webkit-text-stroke:0px #000"><span style="display:inline-block;transform:scaleX(1.0);transform-origin:50% 50%">43.1-2. Зім’яття головки</span></div>
<div class="a" style="left:191.0px;top:638.9px;width:2000px;text-align:center;font-family:'Liberation Sans';font-size:20.6px;line-height:20.6px;font-weight:normal;color:#000;white-space:nowrap;-webkit-text-stroke:0px #000"><span style="display:inline-block;transform:scaleX(1.0);transform-origin:50% 50%">внутрішньої рейки в кривій</span></div>
<div class="a" style="left:191.0px;top:663.7px;width:2000px;text-align:center;font-family:'Liberation Sans';font-size:20.6px;line-height:20.6px;font-weight:normal;color:#000;white-space:nowrap;-webkit-text-stroke:0px #000"><span style="display:inline-block;transform:scaleX(1.0);transform-origin:50% 50%">через перевантаження</span></div>
<div class="box" style="left:1402px;top:602px;width:353px;height:97px;border-width:4.5px"></div>
<div class="a" style="left:578.5px;top:614.1px;width:2000px;text-align:center;font-family:'Liberation Sans';font-size:20.6px;line-height:20.6px;font-weight:normal;color:#000;white-space:nowrap;-webkit-text-stroke:0px #000"><span style="display:inline-block;transform:scaleX(1.0);transform-origin:50% 50%">44.1-2. Боковий знос головки</span></div>
<div class="a" style="left:578.5px;top:638.9px;width:2000px;text-align:center;font-family:'Liberation Sans';font-size:20.6px;line-height:20.6px;font-weight:normal;color:#000;white-space:nowrap;-webkit-text-stroke:0px #000"><span style="display:inline-block;transform:scaleX(1.0);transform-origin:50% 50%">рейки, що перевищує допустимі</span></div>
<div class="a" style="left:578.5px;top:663.7px;width:2000px;text-align:center;font-family:'Liberation Sans';font-size:20.6px;line-height:20.6px;font-weight:normal;color:#000;white-space:nowrap;-webkit-text-stroke:0px #000"><span style="display:inline-block;transform:scaleX(1.0);transform-origin:50% 50%">норми</span></div>
<svg class="a" style="left:400px;top:700px" width="270" height="200" viewBox="0 0 1944 1440"><path d="M265 505 C235 540 230 600 240 650 C255 690 320 720 350 760 C375 800 365 1000 355 1120 C300 1160 150 1190 100 1220 C85 1240 95 1265 110 1270 C300 1300 500 1330 650 1355 C700 1345 750 1320 800 1300" stroke="#1a1a1a" fill="none" stroke-linejoin="round" stroke-linecap="round" stroke-width="30"/><path d="M265 505 C330 490 450 510 545 545 C560 600 560 640 555 665 C480 700 420 740 410 800 C400 900 405 1050 420 1160 C470 1230 580 1290 660 1330" stroke="#1a1a1a" fill="none" stroke-linejoin="round" stroke-linecap="round" stroke-width="22"/><path d="M265 505 L1380 115 C1480 110 1600 120 1660 150 C1680 200 1670 260 1620 300" stroke="#1a1a1a" fill="none" stroke-linejoin="round" stroke-linecap="round" stroke-width="28"/><path d="M545 545 L1650 165" stroke="#1a1a1a" fill="none" stroke-linejoin="round" stroke-linecap="round" stroke-width="18"/><path d="M555 665 L1620 300" stroke="#1a1a1a" fill="none" stroke-linejoin="round" stroke-linecap="round" stroke-width="22"/><path d="M1610 300 C1590 450 1580 600 1590 690 C1640 740 1750 780 1800 800 C1820 830 1815 850 1800 860 L800 1300" stroke="#1a1a1a" fill="none" stroke-linejoin="round" stroke-linecap="round" stroke-width="30"/><path d="M690 1310 L1780 830" stroke="#1a1a1a" fill="none" stroke-linejoin="round" stroke-linecap="round" stroke-width="10" stroke-dasharray="40 8"/><path d="M450 1170 L1450 760" stroke="#1a1a1a" fill="none" stroke-linejoin="round" stroke-linecap="round" stroke-width="9"/><ellipse cx="590" cy="910" rx="38" ry="60" transform="rotate(15 590 910)" stroke="#1a1a1a" fill="none" stroke-linejoin="round" stroke-linecap="round" stroke-width="14"/><path d="M580 950 C575 910 595 890 620 885" stroke="#1a1a1a" fill="none" stroke-linejoin="round" stroke-linecap="round" stroke-width="8"/><ellipse cx="875" cy="790" rx="38" ry="60" transform="rotate(15 875 790)" stroke="#1a1a1a" fill="none" stroke-linejoin="round" stroke-linecap="round" stroke-width="14"/><path d="M865 830 C860 790 880 770 905 765" stroke="#1a1a1a" fill="none" stroke-linejoin="round" stroke-linecap="round" stroke-width="8"/><ellipse cx="1150" cy="670" rx="38" ry="60" transform="rotate(15 1150 670)" stroke="#1a1a1a" fill="none" stroke-linejoin="round" stroke-linecap="round" stroke-width="14"/><path d="M1140 710 C1135 670 1155 650 1180 645" stroke="#1a1a1a" fill="none" stroke-linejoin="round" stroke-linecap="round" stroke-width="8"/><ellipse cx="985" cy="360" rx="150" ry="45" transform="rotate(-22 985 360)" fill="#2a2a2a"/><ellipse cx="690" cy="480" rx="100" ry="30" transform="rotate(-22 690 480)" fill="#2a2a2a"/><ellipse cx="1290" cy="270" rx="110" ry="28" transform="rotate(-22 1290 270)" fill="#2a2a2a"/><ellipse cx="1530" cy="200" rx="65" ry="22" transform="rotate(-22 1530 200)" fill="#2a2a2a"/><path d="M580 530 L1600 175" stroke="#333" stroke-width="6" stroke-dasharray="30 40"/></svg><svg class="a" style="left:710px;top:700px" width="270" height="200" viewBox="0 0 1944 1440"><defs><clipPath id="r2c"><path d="M330 420 C700 430 1000 450 1300 470 C1380 500 1420 560 1430 680 L1460 1000 C1450 1050 1430 1080 1400 1090 C1300 1120 1200 1160 1020 1260 C990 1290 970 1320 960 1330 C850 1325 750 1320 650 1310 C620 1270 610 1220 590 1190 C540 1140 300 1080 180 1040 C110 1000 90 930 85 880 C80 780 75 650 85 570 C100 500 200 440 330 420 Z"/></clipPath></defs><g clip-path="url(#r2c)" fill="#333"><circle cx="145" cy="457" r="13"/><circle cx="198" cy="471" r="12"/><circle cx="259" cy="470" r="10"/><circle cx="335" cy="455" r="10"/><circle cx="396" cy="482" r="11"/><circle cx="451" cy="475" r="15"/><circle cx="526" cy="466" r="15"/><circle cx="569" cy="483" r="11"/><circle cx="634" cy="456" r="12"/><circle cx="720" cy="459" r="13"/><circle cx="776" cy="465" r="13"/><circle cx="817" cy="454" r="11"/><circle cx="901" cy="467" r="12"/><circle cx="960" cy="468" r="11"/><circle cx="1030" cy="477" r="11"/><circle cx="1084" cy="471" r="14"/><circle cx="1151" cy="462" r="15"/><circle cx="1191" cy="467" r="14"/><circle cx="1254" cy="470" r="10"/><circle cx="1335" cy="480" r="13"/><circle cx="1405" cy="463" r="13"/><circle cx="1456" cy="473" r="12"/><circle cx="132" cy="548" r="12"/><circle cx="188" cy="516" r="14"/><circle cx="249" cy="550" r="14"/><circle cx="298" cy="528" r="13"/><circle cx="351" cy="531" r="11"/><circle cx="416" cy="516" r="14"/><circle cx="479" cy="523" r="12"/><circle cx="567" cy="517" r="12"/><circle cx="618" cy="546" r="14"/><circle cx="691" cy="524" r="12"/><circle cx="735" cy="546" r="15"/><circle cx="789" cy="520" r="11"/><circle cx="854" cy="531" r="13"/><circle cx="917" cy="514" r="12"/><circle cx="983" cy="534" r="15"/><circle cx="1057" cy="533" r="13"/><circle cx="1118" cy="516" r="14"/><circle cx="1184" cy="545" r="14"/><circle cx="1232" cy="528" r="11"/><circle cx="1303" cy="516" r="10"/><circle cx="1350" cy="520" r="12"/><circle cx="1406" cy="514" r="11"/><circle cx="137" cy="589" r="10"/><circle cx="226" cy="598" r="11"/><circle cx="266" cy="589" r="12"/><circle cx="323" cy="607" r="15"/><circle cx="398" cy="593" r="10"/><circle cx="447" cy="588" r="11"/><circle cx="535" cy="582" r="10"/><circle cx="601" cy="595" r="11"/><circle cx="649" cy="577" r="13"/><circle cx="726" cy="607" r="13"/><circle cx="762" cy="589" r="11"/><circle cx="843" cy="595" r="14"/><circle cx="889" cy="584" r="14"/><circle cx="974" cy="607" r="14"/><circle cx="1030" cy="603" r="11"/><circle cx="1082" cy="589" r="10"/><circle cx="1126" cy="586" r="11"/><circle cx="1212" cy="610" r="12"/><circle cx="1283" cy="612" r="15"/><circle cx="1324" cy="584" r="11"/><circle cx="1380" cy="583" r="13"/><circle cx="1467" cy="606" r="12"/><circle cx="126" cy="667" r="10"/><circle cx="188" cy="671" r="14"/><circle cx="253" cy="655" r="11"/><circle cx="316" cy="650" r="14"/><circle cx="385" cy="652" r="12"/><circle cx="446" cy="664" r="11"/><circle cx="479" cy="643" r="15"/><circle cx="565" cy="643" r="14"/><circle cx="633" cy="662" r="12"/><circle cx="680" cy="643" r="10"/><circle cx="757" cy="661" r="13"/><circle cx="818" cy="654" r="14"/><circle cx="876" cy="646" r="11"/><circle cx="919" cy="647" r="13"/><circle cx="979" cy="653" r="11"/><circle cx="1065" cy="651" r="12"/><circle cx="1115" cy="671" r="12"/><circle cx="1189" cy="656" r="13"/><circle cx="1237" cy="639" r="12"/><circle cx="1287" cy="638" r="14"/><circle cx="1348" cy="655" r="14"/><circle cx="1424" cy="650" r="13"/><circle cx="153" cy="728" r="11"/><circle cx="215" cy="709" r="11"/><circle cx="285" cy="718" r="13"/><circle cx="346" cy="733" r="12"/><circle cx="403" cy="718" r="13"/><circle cx="468" cy="716" r="13"/><circle cx="522" cy="734" r="13"/><circle cx="599" cy="734" r="11"/><circle cx="649" cy="734" r="14"/><circle cx="696" cy="704" r="12"/><circle cx="756" cy="709" r="10"/><circle cx="839" cy="728" r="14"/><circle cx="883" cy="726" r="13"/><circle cx="944" cy="732" r="15"/><circle cx="1009" cy="734" r="12"/><circle cx="1081" cy="736" r="14"/><circle cx="1131" cy="716" r="13"/><circle cx="1199" cy="707" r="12"/><circle cx="1275" cy="701" r="13"/><circle cx="1327" cy="701" r="12"/><circle cx="1395" cy="718" r="10"/><circle cx="1470" cy="728" r="15"/><circle cx="106" cy="772" r="10"/><circle cx="192" cy="772" r="11"/><circle cx="241" cy="795" r="14"/><circle cx="297" cy="767" r="15"/><circle cx="371" cy="787" r="10"/><circle cx="414" cy="787" r="12"/><circle cx="477" cy="796" r="13"/><circle cx="565" cy="765" r="14"/><circle cx="600" cy="793" r="12"/><circle cx="672" cy="782" r="15"/><circle cx="732" cy="767" r="13"/><circle cx="793" cy="766" r="11"/><circle cx="848" cy="769" r="12"/><circle cx="919" cy="789" r="11"/><circle cx="988" cy="768" r="12"/><circle cx="1033" cy="771" r="10"/><circle cx="1120" cy="782" r="11"/><circle cx="1173" cy="796" r="11"/><circle cx="1247" cy="778" r="12"/><circle cx="1310" cy="776" r="13"/><circle cx="1367" cy="797" r="12"/><circle cx="1434" cy="787" r="13"/><circle cx="148" cy="837" r="10"/><circle cx="200" cy="827" r="14"/><circle cx="266" cy="830" r="10"/><circle cx="349" cy="855" r="13"/><circle cx="391" cy="833" r="11"/><circle cx="460" cy="830" r="12"/><circle cx="514" cy="859" r="15"/><circle cx="587" cy="833" r="15"/><circle cx="640" cy="837" r="10"/><circle cx="705" cy="841" r="13"/><circle cx="760" cy="842" r="10"/><circle cx="825" cy="827" r="12"/><circle cx="879" cy="825" r="12"/><circle cx="947" cy="845" r="13"/><circle cx="1028" cy="848" r="14"/><circle cx="1095" cy="838" r="12"/><circle cx="1160" cy="829" r="14"/><circle cx="1210" cy="826" r="14"/><circle cx="1281" cy="847" r="14"/><circle cx="1340" cy="829" r="13"/><circle cx="1391" cy="854" r="14"/><circle cx="1465" cy="845" r="14"/><circle cx="127" cy="911" r="11"/><circle cx="165" cy="891" r="12"/><circle cx="230" cy="916" r="13"/><circle cx="311" cy="909" r="13"/><circle cx="368" cy="886" r="14"/><circle cx="439" cy="904" r="13"/><circle cx="498" cy="888" r="14"/><circle cx="545" cy="889" r="11"/><circle cx="624" cy="893" r="14"/><circle cx="695" cy="904" r="12"/><circle cx="739" cy="911" r="14"/><circle cx="806" cy="909" r="10"/><circle cx="851" cy="895" r="14"/><circle cx="919" cy="906" r="10"/><circle cx="972" cy="896" r="13"/><circle cx="1057" cy="910" r="11"/><circle cx="1113" cy="903" r="12"/><circle cx="1160" cy="918" r="11"/><circle cx="1253" cy="920" r="10"/><circle cx="1297" cy="916" r="15"/><circle cx="1358" cy="896" r="11"/><circle cx="1438" cy="894" r="13"/><circle cx="138" cy="967" r="15"/><circle cx="200" cy="978" r="13"/><circle cx="289" cy="973" r="11"/><circle cx="351" cy="966" r="10"/><circle cx="381" cy="966" r="12"/><circle cx="454" cy="953" r="12"/><circle cx="516" cy="978" r="10"/><circle cx="594" cy="978" r="11"/><circle cx="662" cy="974" r="15"/><circle cx="701" cy="961" r="12"/><circle cx="789" cy="969" r="12"/><circle cx="830" cy="958" r="10"/><circle cx="881" cy="978" r="11"/><circle cx="973" cy="957" r="11"/><circle cx="1019" cy="955" r="12"/><circle cx="1097" cy="980" r="14"/><circle cx="1148" cy="981" r="15"/><circle cx="1207" cy="974" r="10"/><circle cx="1275" cy="964" r="14"/><circle cx="1334" cy="958" r="10"/><circle cx="1406" cy="953" r="12"/><circle cx="1447" cy="959" r="14"/><circle cx="137" cy="1019" r="13"/><circle cx="175" cy="1030" r="12"/><circle cx="232" cy="1016" r="11"/><circle cx="321" cy="1028" r="11"/><circle cx="383" cy="1046" r="12"/><circle cx="417" cy="1017" r="10"/><circle cx="486" cy="1013" r="11"/><circle cx="545" cy="1031" r="14"/><circle cx="625" cy="1025" r="12"/><circle cx="679" cy="1024" r="12"/><circle cx="724" cy="1020" r="15"/><circle cx="789" cy="1028" r="13"/><circle cx="877" cy="1018" r="11"/><circle cx="917" cy="1024" r="12"/><circle cx="1004" cy="1041" r="14"/><circle cx="1033" cy="1011" r="14"/><circle cx="1126" cy="1027" r="13"/><circle cx="1156" cy="1024" r="15"/><circle cx="1248" cy="1041" r="15"/><circle cx="1289" cy="1014" r="11"/><circle cx="1361" cy="1035" r="15"/><circle cx="1430" cy="1033" r="14"/><circle cx="149" cy="1092" r="10"/><circle cx="223" cy="1080" r="15"/><circle cx="280" cy="1083" r="11"/><circle cx="328" cy="1095" r="13"/><circle cx="385" cy="1075" r="13"/><circle cx="464" cy="1086" r="11"/><circle cx="527" cy="1072" r="12"/><circle cx="584" cy="1107" r="13"/><circle cx="661" cy="1089" r="11"/><circle cx="700" cy="1107" r="14"/><circle cx="764" cy="1073" r="12"/><circle cx="839" cy="1087" r="11"/><circle cx="901" cy="1105" r="11"/><circle cx="940" cy="1084" r="12"/><circle cx="1026" cy="1079" r="14"/><circle cx="1090" cy="1090" r="11"/><circle cx="1160" cy="1083" r="14"/><circle cx="1195" cy="1080" r="14"/><circle cx="1260" cy="1106" r="12"/><circle cx="1318" cy="1080" r="12"/><circle cx="1397" cy="1106" r="11"/><circle cx="1449" cy="1080" r="15"/><circle cx="107" cy="1136" r="10"/><circle cx="178" cy="1166" r="14"/><circle cx="252" cy="1170" r="15"/><circle cx="300" cy="1141" r="15"/><circle cx="377" cy="1135" r="13"/><circle cx="426" cy="1147" r="12"/><circle cx="480" cy="1134" r="11"/><circle cx="549" cy="1168" r="11"/><circle cx="633" cy="1141" r="12"/><circle cx="690" cy="1164" r="12"/><circle cx="724" cy="1151" r="12"/><circle cx="817" cy="1141" r="12"/><circle cx="878" cy="1135" r="12"/><circle cx="937" cy="1162" r="10"/><circle cx="971" cy="1136" r="15"/><circle cx="1041" cy="1161" r="14"/><circle cx="1106" cy="1144" r="15"/><circle cx="1178" cy="1143" r="14"/><circle cx="1229" cy="1144" r="10"/><circle cx="1307" cy="1167" r="13"/><circle cx="1376" cy="1135" r="11"/><circle cx="1421" cy="1168" r="15"/><circle cx="147" cy="1205" r="12"/><circle cx="213" cy="1229" r="11"/><circle cx="286" cy="1223" r="14"/><circle cx="347" cy="1218" r="12"/><circle cx="393" cy="1209" r="14"/><circle cx="446" cy="1203" r="14"/><circle cx="514" cy="1198" r="10"/><circle cx="587" cy="1208" r="15"/><circle cx="661" cy="1232" r="11"/><circle cx="694" cy="1199" r="12"/><circle cx="779" cy="1212" r="11"/><circle cx="830" cy="1218" r="13"/><circle cx="904" cy="1226" r="13"/><circle cx="943" cy="1226" r="11"/><circle cx="1021" cy="1209" r="14"/><circle cx="1070" cy="1205" r="11"/><circle cx="1131" cy="1228" r="13"/><circle cx="1199" cy="1210" r="15"/><circle cx="1267" cy="1204" r="14"/><circle cx="1335" cy="1232" r="11"/><circle cx="1390" cy="1225" r="14"/><circle cx="1468" cy="1197" r="11"/><circle cx="106" cy="1265" r="15"/><circle cx="185" cy="1291" r="12"/><circle cx="257" cy="1274" r="11"/><circle cx="316" cy="1292" r="11"/><circle cx="371" cy="1280" r="11"/><circle cx="425" cy="1263" r="11"/><circle cx="483" cy="1280" r="13"/><circle cx="543" cy="1258" r="12"/><circle cx="622" cy="1265" r="12"/><circle cx="667" cy="1287" r="13"/><circle cx="724" cy="1262" r="12"/><circle cx="804" cy="1281" r="10"/><circle cx="852" cy="1283" r="12"/><circle cx="918" cy="1269" r="15"/><circle cx="981" cy="1278" r="12"/><circle cx="1047" cy="1289" r="15"/><circle cx="1107" cy="1265" r="14"/><circle cx="1163" cy="1258" r="15"/><circle cx="1233" cy="1288" r="12"/><circle cx="1312" cy="1275" r="11"/><circle cx="1343" cy="1278" r="13"/><circle cx="1437" cy="1261" r="13"/></g><ellipse cx="1055" cy="720" rx="290" ry="170" transform="rotate(12 1055 720)" fill="#fff"/><path d="M330 420 C700 430 1000 450 1300 470 C1380 500 1420 560 1430 680 L1460 1000 C1450 1050 1430 1080 1400 1090 C1300 1120 1200 1160 1020 1260 C990 1290 970 1320 960 1330 C850 1325 750 1320 650 1310 C620 1270 610 1220 590 1190 C540 1140 300 1080 180 1040 C110 1000 90 930 85 880 C80 780 75 650 85 570 C100 500 200 440 330 420 Z" stroke="#262626" fill="none" stroke-linejoin="round" stroke-linecap="round" stroke-width="34"/><path d="M150 460 C400 330 650 200 830 140 C1000 120 1150 140 1300 150 C1450 160 1600 170 1750 250 C1800 320 1830 400 1840 500 C1850 600 1870 700 1860 820 C1840 860 1800 880 1700 930 C1600 980 1500 1030 1460 1040" stroke="#262626" fill="none" stroke-linejoin="round" stroke-linecap="round" stroke-width="22"/><path d="M1820 450 C1840 600 1870 750 1860 820" stroke="#262626" fill="none" stroke-linejoin="round" stroke-linecap="round" stroke-width="30"/><path d="M1360 460 L1740 285 M1380 510 L1760 320" stroke="#262626" fill="none" stroke-linejoin="round" stroke-linecap="round" stroke-width="14"/><path d="M1400 480 L1720 320" stroke="#262626" fill="none" stroke-linejoin="round" stroke-linecap="round" stroke-width="30"/><ellipse cx="1060" cy="720" rx="270" ry="160" transform="rotate(14 1060 720)" stroke="#262626" fill="none" stroke-linejoin="round" stroke-linecap="round" stroke-width="18"/><ellipse cx="1060" cy="720" rx="200" ry="115" transform="rotate(14 1060 720)" stroke="#262626" fill="none" stroke-linejoin="round" stroke-linecap="round" stroke-width="14"/><ellipse cx="1060" cy="720" rx="130" ry="75" transform="rotate(14 1060 720)" stroke="#262626" fill="none" stroke-linejoin="round" stroke-linecap="round" stroke-width="12"/><ellipse cx="1060" cy="720" rx="70" ry="42" transform="rotate(14 1060 720)" stroke="#262626" fill="none" stroke-linejoin="round" stroke-linecap="round" stroke-width="10"/><ellipse cx="1060" cy="720" rx="30" ry="20" transform="rotate(14 1060 720)" stroke="#262626" fill="none" stroke-linejoin="round" stroke-linecap="round" stroke-width="8"/><path d="M1000 580 L1050 720 M1120 600 L1090 700 M900 760 L1000 730 M1150 720 L1300 710 M1080 760 L1120 850" stroke="#262626" fill="none" stroke-linejoin="round" stroke-linecap="round" stroke-width="8"/><path d="M1020 1260 C1060 1200 1130 1170 1200 1160 M1000 1300 C1060 1250 1140 1200 1210 1170" stroke="#262626" fill="none" stroke-linejoin="round" stroke-linecap="round" stroke-width="14"/></svg><svg class="a" style="left:1040px;top:700px" width="320" height="200" viewBox="0 0 2304 1440"><path d="M270 500 L290 610 L420 660 L430 990 L130 1050 L120 1100 L780 1190 L540 1040 L510 1020 L510 680 L660 620 L640 520 Z" stroke="#222" fill="none" stroke-linejoin="round" stroke-linecap="round" stroke-width="34"/><path d="M270 490 L1640 210 L2000 230 L1970 310 L1920 330" stroke="#222" fill="none" stroke-linejoin="round" stroke-linecap="round" stroke-width="34"/><path d="M640 520 L1900 250 M560 560 L1950 280" stroke="#222" fill="none" stroke-linejoin="round" stroke-linecap="round" stroke-width="18"/><path d="M660 620 L1920 330" stroke="#222" fill="none" stroke-linejoin="round" stroke-linecap="round" stroke-width="30"/><path d="M420 515 L1720 228 M520 540 L1820 255 M600 570 L1900 290 M680 600 L1880 320" stroke="#222" fill="none" stroke-linejoin="round" stroke-linecap="round" stroke-width="20" stroke-dasharray="120 25 60 20"/><path d="M130 1060 L420 1000 M140 1090 L760 1180 M800 1170 L2140 780" stroke="#222" fill="none" stroke-linejoin="round" stroke-linecap="round" stroke-width="14" stroke-dasharray="50 15"/><path d="M1880 330 L1860 660 L2150 760 L2150 790 L780 1190" stroke="#222" fill="none" stroke-linejoin="round" stroke-linecap="round" stroke-width="34"/><path d="M550 1020 L1840 680" stroke="#222" fill="none" stroke-linejoin="round" stroke-linecap="round" stroke-width="22"/></svg><svg class="a" style="left:1420px;top:700px" width="320" height="200" viewBox="0 0 2304 1440"><defs><clipPath id="r4c"><path d="M520 380 C400 400 250 440 200 470 C150 530 140 600 140 700 C140 850 130 950 160 1050 C200 1100 400 1150 540 1190 C600 1220 640 1280 650 1360 L1130 1360 C1300 1250 1450 1150 1580 1100 L1620 1130 C1500 950 1430 800 1380 680 C1330 580 1290 520 1200 490 C1000 440 800 410 520 380 Z"/></clipPath></defs><g clip-path="url(#r4c)"><path d="M-828 1500 L372 100 M-680 1500 L520 100 M-532 1500 L668 100 M-384 1500 L816 100 M-236 1500 L964 100 M-88 1500 L1112 100 M60 1500 L1260 100 M208 1500 L1408 100 M356 1500 L1556 100 M504 1500 L1704 100 M652 1500 L1852 100 M800 1500 L2000 100 M948 1500 L2148 100 M1096 1500 L2296 100 M1244 1500 L2444 100 M1392 1500 L2592 100 M1540 1500 L2740 100 M1688 1500 L2888 100 M1836 1500 L3036 100 M1984 1500 L3184 100 M2132 1500 L3332 100 M2280 1500 L3480 100" stroke="#262626" stroke-width="16"/></g><path d="M520 380 C400 400 250 440 200 470 C150 530 140 600 140 700 C140 850 130 950 160 1050 C200 1100 400 1150 540 1190 C600 1220 640 1280 650 1360 L1130 1360 C1300 1250 1450 1150 1580 1100 L1620 1130 C1500 950 1430 800 1380 680 C1330 580 1290 520 1200 490 C1000 440 800 410 520 380 Z" stroke="#35362a" fill="none" stroke-linejoin="round" stroke-linecap="round" stroke-width="34"/><path d="M200 470 C300 400 420 350 520 330 C800 230 1000 150 1100 130 C1200 120 1300 115 1350 130 C1450 160 1550 170 1650 200 C1750 230 1820 270 1840 300 C1900 400 1930 480 1950 520 C2020 620 2100 700 2160 800 C2170 850 2160 870 2150 880 C1950 980 1800 1060 1640 1160 C1600 1180 1570 1180 1540 1170" stroke="#35362a" fill="none" stroke-linejoin="round" stroke-linecap="round" stroke-width="30"/><path d="M540 370 L1120 365 M1160 365 L1500 360" stroke="#35362a" fill="none" stroke-linejoin="round" stroke-linecap="round" stroke-width="14" stroke-dasharray="50 40"/><path d="M1620 520 L1620 1100" stroke="#35362a" fill="none" stroke-linejoin="round" stroke-linecap="round" stroke-width="16" stroke-dasharray="60 35"/><path d="M1450 370 C1560 400 1610 460 1620 520" stroke="#35362a" fill="none" stroke-linejoin="round" stroke-linecap="round" stroke-width="12"/><path d="M1250 460 L1620 290 M1300 490 L1720 300 M1340 530 L1820 310 M1370 580 L1820 340 M1390 630 L1720 450" stroke="#35362a" fill="none" stroke-linejoin="round" stroke-linecap="round" stroke-width="11"/><path d="M1100 1340 C1150 1250 1300 1140 1450 1110 C1530 1100 1590 1110 1610 1130 M1140 1300 C1250 1220 1400 1140 1520 1150" stroke="#35362a" fill="none" stroke-linejoin="round" stroke-linecap="round" stroke-width="20"/></svg>
<div class="ln" style="left:558.0px;top:702px;width:2px;height:6px"></div>
<div class="ln" style="left:844.0px;top:706px;width:2px;height:6px"></div>
<div class="ln" style="left:1220.0px;top:704px;width:2px;height:6px"></div>
<div class="ln" style="left:1549.0px;top:703px;width:2px;height:6px"></div>
<div class="ln" style="left:558px;top:909.0px;width:993px;height:2px"></div>
<div class="ln" style="left:557.0px;top:901px;width:2px;height:9px"></div>
<div class="ln" style="left:845.0px;top:897px;width:2px;height:13px"></div>
<div class="ln" style="left:1220.0px;top:881px;width:2px;height:24px"></div>
<div class="ln" style="left:1549.0px;top:900px;width:2px;height:10px"></div>
<div class="ln" style="left:1053.0px;top:910px;width:2px;height:28px"></div>
<div class="box" style="left:347px;top:937px;width:1402px;height:61px;border-width:4.5px"></div>
<div class="a" style="left:47px;top:951.6px;width:2000px;text-align:center;font-family:'Liberation Serif';font-size:32.7px;line-height:32.7px;font-weight:bold;color:#000;white-space:nowrap;-webkit-text-stroke:0px #000"><span style="display:inline-block;transform:scaleX(1.0);transform-origin:50% 50%">Причини виникнення</span></div>
<div class="ln" style="left:557.0px;top:997px;width:2px;height:22px"></div>
<div class="ln" style="left:845.0px;top:997px;width:2px;height:22px"></div>
<div class="ln" style="left:1220.0px;top:997px;width:2px;height:22px"></div>
<div class="ln" style="left:1549.0px;top:997px;width:2px;height:22px"></div>
<div class="box" style="left:347px;top:1018px;width:309px;height:312px;border-width:4.5px"></div>
<div class="a" style="left:-498.5px;top:1031.5px;width:2000px;text-align:center;font-family:'Liberation Serif';font-size:20.4px;line-height:20.4px;font-weight:normal;color:#000;white-space:nowrap;-webkit-text-stroke:0px #000"><span style="display:inline-block;transform:scaleX(1.0);transform-origin:50% 50%">Недостатня металургійна</span></div>
<div class="a" style="left:-498.5px;top:1056.0px;width:2000px;text-align:center;font-family:'Liberation Serif';font-size:20.4px;line-height:20.4px;font-weight:normal;color:#000;white-space:nowrap;-webkit-text-stroke:0px #000"><span style="display:inline-block;transform:scaleX(1.0);transform-origin:50% 50%">якість рейкової сталі (місцеві</span></div>
<div class="a" style="left:-498.5px;top:1080.5px;width:2000px;text-align:center;font-family:'Liberation Serif';font-size:20.4px;line-height:20.4px;font-weight:normal;color:#000;white-space:nowrap;-webkit-text-stroke:0px #000"><span style="display:inline-block;transform:scaleX(1.0);transform-origin:50% 50%">скупчення неметалевих</span></div>
<div class="a" style="left:-498.5px;top:1105.0px;width:2000px;text-align:center;font-family:'Liberation Serif';font-size:20.4px;line-height:20.4px;font-weight:normal;color:#000;white-space:nowrap;-webkit-text-stroke:0px #000"><span style="display:inline-block;transform:scaleX(1.0);transform-origin:50% 50%">включень, витягнутих уздовж</span></div>
<div class="a" style="left:-498.5px;top:1129.4px;width:2000px;text-align:center;font-family:'Liberation Serif';font-size:20.4px;line-height:20.4px;font-weight:normal;color:#000;white-space:nowrap;-webkit-text-stroke:0px #000"><span style="display:inline-block;transform:scaleX(1.0);transform-origin:50% 50%">напрямку прокату),&nbsp; що</span></div>
<div class="a" style="left:-498.5px;top:1153.9px;width:2000px;text-align:center;font-family:'Liberation Serif';font-size:20.4px;line-height:20.4px;font-weight:normal;color:#000;white-space:nowrap;-webkit-text-stroke:0px #000"><span style="display:inline-block;transform:scaleX(1.0);transform-origin:50% 50%">обумовлює недостатню</span></div>
<div class="a" style="left:-498.5px;top:1178.4px;width:2000px;text-align:center;font-family:'Liberation Serif';font-size:20.4px;line-height:20.4px;font-weight:normal;color:#000;white-space:nowrap;-webkit-text-stroke:0px #000"><span style="display:inline-block;transform:scaleX(1.0);transform-origin:50% 50%">контактно-втомну міцність</span></div>
<div class="a" style="left:-498.5px;top:1202.9px;width:2000px;text-align:center;font-family:'Liberation Serif';font-size:20.4px;line-height:20.4px;font-weight:normal;color:#000;white-space:nowrap;-webkit-text-stroke:0px #000"><span style="display:inline-block;transform:scaleX(1.0);transform-origin:50% 50%">металу. Частіше всього</span></div>
<div class="a" style="left:-498.5px;top:1227.4px;width:2000px;text-align:center;font-family:'Liberation Serif';font-size:20.4px;line-height:20.4px;font-weight:normal;color:#000;white-space:nowrap;-webkit-text-stroke:0px #000"><span style="display:inline-block;transform:scaleX(1.0);transform-origin:50% 50%">пошкоджується робоча грань</span></div>
<div class="a" style="left:-498.5px;top:1251.8px;width:2000px;text-align:center;font-family:'Liberation Serif';font-size:20.4px;line-height:20.4px;font-weight:normal;color:#000;white-space:nowrap;-webkit-text-stroke:0px #000"><span style="display:inline-block;transform:scaleX(1.0);transform-origin:50% 50%">зовнішніх ниток на кривих</span></div>
<div class="a" style="left:-498.5px;top:1276.3px;width:2000px;text-align:center;font-family:'Liberation Serif';font-size:20.4px;line-height:20.4px;font-weight:normal;color:#000;white-space:nowrap;-webkit-text-stroke:0px #000"><span style="display:inline-block;transform:scaleX(1.0);transform-origin:50% 50%">ділянках колії</span></div>
<div class="box" style="left:694px;top:1019px;width:315px;height:311px;border-width:4.5px"></div>
<div class="a" style="left:-148.5px;top:1070.0px;width:2000px;text-align:center;font-family:'Liberation Sans';font-size:18.9px;line-height:18.9px;font-weight:normal;color:#000;white-space:nowrap;-webkit-text-stroke:0px #000"><span style="display:inline-block;transform:scaleX(1.0);transform-origin:50% 50%">Основною причиною є</span></div>
<div class="a" style="left:-148.5px;top:1094.4px;width:2000px;text-align:center;font-family:'Liberation Sans';font-size:18.9px;line-height:18.9px;font-weight:normal;color:#000;white-space:nowrap;-webkit-text-stroke:0px #000"><span style="display:inline-block;transform:scaleX(1.0);transform-origin:50% 50%">флокени, що розташовуються</span></div>
<div class="a" style="left:-148.5px;top:1118.8px;width:2000px;text-align:center;font-family:'Liberation Sans';font-size:18.9px;line-height:18.9px;font-weight:normal;color:#000;white-space:nowrap;-webkit-text-stroke:0px #000"><span style="display:inline-block;transform:scaleX(1.0);transform-origin:50% 50%">на глибині 10 мм від поверхні.</span></div>
<div class="a" style="left:-148.5px;top:1143.2px;width:2000px;text-align:center;font-family:'Liberation Sans';font-size:18.9px;line-height:18.9px;font-weight:normal;color:#000;white-space:nowrap;-webkit-text-stroke:0px #000"><span style="display:inline-block;transform:scaleX(1.0);transform-origin:50% 50%">Флокенами зветься зернистий</span></div>
<div class="a" style="left:-148.5px;top:1167.6px;width:2000px;text-align:center;font-family:'Liberation Sans';font-size:18.9px;line-height:18.9px;font-weight:normal;color:#000;white-space:nowrap;-webkit-text-stroke:0px #000"><span style="display:inline-block;transform:scaleX(1.0);transform-origin:50% 50%">надрив металу, від якого</span></div>
<div class="a" style="left:-148.5px;top:1192.0px;width:2000px;text-align:center;font-family:'Liberation Sans';font-size:18.9px;line-height:18.9px;font-weight:normal;color:#000;white-space:nowrap;-webkit-text-stroke:0px #000"><span style="display:inline-block;transform:scaleX(1.0);transform-origin:50% 50%">розвиваються втомні тріщини</span></div>
<div class="a" style="left:-148.5px;top:1216.4px;width:2000px;text-align:center;font-family:'Liberation Sans';font-size:18.9px;line-height:18.9px;font-weight:normal;color:#000;white-space:nowrap;-webkit-text-stroke:0px #000"><span style="display:inline-block;transform:scaleX(1.0);transform-origin:50% 50%">під дією навантаження від</span></div>
<div class="a" style="left:-148.5px;top:1240.8px;width:2000px;text-align:center;font-family:'Liberation Sans';font-size:18.9px;line-height:18.9px;font-weight:normal;color:#000;white-space:nowrap;-webkit-text-stroke:0px #000"><span style="display:inline-block;transform:scaleX(1.0);transform-origin:50% 50%">рухомого складу</span></div>
<div class="box" style="left:1053px;top:1019px;width:314px;height:311px;border-width:4.5px"></div>
<div class="a" style="left:210.0px;top:1081.2px;width:2000px;text-align:center;font-family:'Liberation Serif';font-size:20.4px;line-height:20.4px;font-weight:normal;color:#000;white-space:nowrap;-webkit-text-stroke:0px #000"><span style="display:inline-block;transform:scaleX(1.0);transform-origin:50% 50%">Збільшений тиск коліс на</span></div>
<div class="a" style="left:210.0px;top:1105.5px;width:2000px;text-align:center;font-family:'Liberation Serif';font-size:20.4px;line-height:20.4px;font-weight:normal;color:#000;white-space:nowrap;-webkit-text-stroke:0px #000"><span style="display:inline-block;transform:scaleX(1.0);transform-origin:50% 50%">внутрішню нитку в кривій,</span></div>
<div class="a" style="left:210.0px;top:1129.9px;width:2000px;text-align:center;font-family:'Liberation Serif';font-size:20.4px;line-height:20.4px;font-weight:normal;color:#000;white-space:nowrap;-webkit-text-stroke:0px #000"><span style="display:inline-block;transform:scaleX(1.0);transform-origin:50% 50%">викликаний зниженням</span></div>
<div class="a" style="left:210.0px;top:1154.2px;width:2000px;text-align:center;font-family:'Liberation Serif';font-size:20.4px;line-height:20.4px;font-weight:normal;color:#000;white-space:nowrap;-webkit-text-stroke:0px #000"><span style="display:inline-block;transform:scaleX(1.0);transform-origin:50% 50%">фактичних швидкостей руху</span></div>
<div class="a" style="left:210.0px;top:1178.5px;width:2000px;text-align:center;font-family:'Liberation Serif';font-size:20.4px;line-height:20.4px;font-weight:normal;color:#000;white-space:nowrap;-webkit-text-stroke:0px #000"><span style="display:inline-block;transform:scaleX(1.0);transform-origin:50% 50%">поїздів, прийнятих для</span></div>
<div class="a" style="left:210.0px;top:1202.9px;width:2000px;text-align:center;font-family:'Liberation Serif';font-size:20.4px;line-height:20.4px;font-weight:normal;color:#000;white-space:nowrap;-webkit-text-stroke:0px #000"><span style="display:inline-block;transform:scaleX(1.0);transform-origin:50% 50%">розрахунку підвищення</span></div>
<div class="a" style="left:210.0px;top:1227.2px;width:2000px;text-align:center;font-family:'Liberation Serif';font-size:20.4px;line-height:20.4px;font-weight:normal;color:#000;white-space:nowrap;-webkit-text-stroke:0px #000"><span style="display:inline-block;transform:scaleX(1.0);transform-origin:50% 50%">зовнішньої нитки</span></div>
<div class="box" style="left:1410px;top:1018px;width:339px;height:312px;border-width:4.5px"></div>
<div class="a" style="left:579.5px;top:1043.6px;width:2000px;text-align:center;font-family:'Liberation Serif';font-size:20.4px;line-height:20.4px;font-weight:normal;color:#000;white-space:nowrap;-webkit-text-stroke:0px #000"><span style="display:inline-block;transform:scaleX(1.0);transform-origin:50% 50%">Недостатня зносостійкість</span></div>
<div class="a" style="left:579.5px;top:1068.0px;width:2000px;text-align:center;font-family:'Liberation Serif';font-size:20.4px;line-height:20.4px;font-weight:normal;color:#000;white-space:nowrap;-webkit-text-stroke:0px #000"><span style="display:inline-block;transform:scaleX(1.0);transform-origin:50% 50%">рейкового металу та посилена</span></div>
<div class="a" style="left:579.5px;top:1092.4px;width:2000px;text-align:center;font-family:'Liberation Serif';font-size:20.4px;line-height:20.4px;font-weight:normal;color:#000;white-space:nowrap;-webkit-text-stroke:0px #000"><span style="display:inline-block;transform:scaleX(1.0);transform-origin:50% 50%">бокова дія рухомого складу,</span></div>
<div class="a" style="left:579.5px;top:1116.8px;width:2000px;text-align:center;font-family:'Liberation Serif';font-size:20.4px;line-height:20.4px;font-weight:normal;color:#000;white-space:nowrap;-webkit-text-stroke:0px #000"><span style="display:inline-block;transform:scaleX(1.0);transform-origin:50% 50%">пов’язана, як правило, зі</span></div>
<div class="a" style="left:579.5px;top:1141.3px;width:2000px;text-align:center;font-family:'Liberation Serif';font-size:20.4px;line-height:20.4px;font-weight:normal;color:#000;white-space:nowrap;-webkit-text-stroke:0px #000"><span style="display:inline-block;transform:scaleX(1.0);transform-origin:50% 50%">збільшенням кутів набігу гребенів</span></div>
<div class="a" style="left:579.5px;top:1165.7px;width:2000px;text-align:center;font-family:'Liberation Serif';font-size:20.4px;line-height:20.4px;font-weight:normal;color:#000;white-space:nowrap;-webkit-text-stroke:0px #000"><span style="display:inline-block;transform:scaleX(1.0);transform-origin:50% 50%">коліс на бокову грань рейок через</span></div>
<div class="a" style="left:579.5px;top:1190.1px;width:2000px;text-align:center;font-family:'Liberation Serif';font-size:20.4px;line-height:20.4px;font-weight:normal;color:#000;white-space:nowrap;-webkit-text-stroke:0px #000"><span style="display:inline-block;transform:scaleX(1.0);transform-origin:50% 50%">порушення нормального</span></div>
<div class="a" style="left:579.5px;top:1214.5px;width:2000px;text-align:center;font-family:'Liberation Serif';font-size:20.4px;line-height:20.4px;font-weight:normal;color:#000;white-space:nowrap;-webkit-text-stroke:0px #000"><span style="display:inline-block;transform:scaleX(1.0);transform-origin:50% 50%">вписування візків в кривій ділянці.</span></div>
<div class="a" style="left:579.5px;top:1238.9px;width:2000px;text-align:center;font-family:'Liberation Serif';font-size:20.4px;line-height:20.4px;font-weight:normal;color:#000;white-space:nowrap;-webkit-text-stroke:0px #000"><span style="display:inline-block;transform:scaleX(1.0);transform-origin:50% 50%">Також інколи має місце на прямих</span></div>
<div class="a" style="left:579.5px;top:1263.3px;width:2000px;text-align:center;font-family:'Liberation Serif';font-size:20.4px;line-height:20.4px;font-weight:normal;color:#000;white-space:nowrap;-webkit-text-stroke:0px #000"><span style="display:inline-block;transform:scaleX(1.0);transform-origin:50% 50%">ділянках довжиною від 1 до 30 м.</span></div>
<div class="a" style="left:347px;top:1305px;width:310px;height:3px;background:#4a78b8"></div>
<div class="a" style="left:1410px;top:1305px;width:339px;height:3px;background:#4a78b8"></div>
<div class="a" style="left:1807px;top:272px;width:32px;height:9px;background:#8a8a8a"></div>
<svg class="a" style="left:1812px;top:276px" width="22" height="20" viewBox="0 0 22 20" fill="none" stroke="#8a8a8a" stroke-width="1.8"><path d="M1 2l6 5M7 3v4H3M21 2l-6 5M15 3v4h4M1 19l6-5M7 18v-4H3M21 19l-6-5M15 18v-4h4"/></svg>
<svg class="a" style="left:231px;top:741px" width="18" height="25" viewBox="0 0 18 25"><path d="M1.5 1.5V20.5L6.5 15.5L10.5 23L13 21.8L9.5 14.5H16z" fill="#fff" stroke="#000" stroke-width="1.2" stroke-linejoin="round"/></svg><div class="a" id="tool"></div>
<svg class="a" style="left:52px;top:1319px" width="36" height="36" viewBox="0 0 36 36"><rect x="12.5" y="3" width="11" height="19" rx="5.5" stroke="#fff" stroke-width="1.9" fill="none"/><path d="M7 17c0 6 5 10.5 11 10.5s11-4.5 11-10.5M18 27.5V33M11.5 33h13" stroke="#fff" stroke-width="1.9" fill="none"/><path d="M3.5 33.5L32 3" stroke="#f0245a" stroke-width="2.6" stroke-linecap="round"/></svg>
<svg class="a" style="left:107px;top:1333px" width="12" height="8" viewBox="0 0 12 8"><path d="M1.5 6.5L6 2l4.5 4.5" stroke="#fff" stroke-width="1.8" fill="none"/></svg>
<div class="a" style="left:-80px;top:1360px;width:300px;text-align:center;font:bold 15.3px 'Liberation Sans';color:#fff;white-space:nowrap">Звук</div>
<svg class="a" style="left:178px;top:1326px" width="36" height="24" viewBox="0 0 36 24"><rect x="1.5" y="1.5" width="22" height="19.5" rx="4" stroke="#fff" stroke-width="1.9" fill="none"/><path d="M24 9l9.5-6.5v17.5L24 14" stroke="#fff" stroke-width="1.9" fill="none"/></svg>
<svg class="a" style="left:239px;top:1333px" width="12" height="8" viewBox="0 0 12 8"><path d="M1.5 6.5L6 2l4.5 4.5" stroke="#fff" stroke-width="1.8" fill="none"/></svg>
<div class="a" style="left:46px;top:1360px;width:300px;text-align:center;font:bold 15.3px 'Liberation Sans';color:#fff;white-space:nowrap">Видео</div>
<svg class="a" style="left:702px;top:1325px" width="28" height="26" viewBox="0 0 28 26"><circle cx="8.5" cy="5" r="3.6" stroke="#fff" stroke-width="1.9" fill="none"/><circle cx="17.5" cy="9.5" r="3.6" stroke="#fff" stroke-width="1.9" fill="none"/><path d="M9.5 23.5H5c-2.5 0-3.8-1.2-3.8-3.3c0-3.8 2.5-6.6 6.5-6.8" stroke="#fff" stroke-width="1.9" fill="none"/><rect x="10.5" y="16" width="15.5" height="8" rx="4" stroke="#fff" stroke-width="1.9" fill="none"/></svg>
<div class="a" style="left:737px;top:1328px;font:bold 13px 'Liberation Sans';color:#c8c8c8">9</div>
<svg class="a" style="left:781px;top:1333px" width="12" height="8" viewBox="0 0 12 8"><path d="M1.5 6.5L6 2l4.5 4.5" stroke="#fff" stroke-width="1.8" fill="none"/></svg>
<div class="a" style="left:566px;top:1360px;width:300px;text-align:center;font:bold 15.3px 'Liberation Sans';color:#fff;white-space:nowrap">Участники</div>
<svg class="a" style="left:849px;top:1323px" width="32" height="30" viewBox="0 0 32 30"><path d="M6 2h20c2.5 0 4 1.5 4 4v13c0 2.5-1.5 4-4 4H13l-6.5 5.5V23H6c-2.5 0-4-1.5-4-4V6c0-2.5 1.5-4 4-4z" stroke="#fff" stroke-width="1.9" fill="none" stroke-linejoin="round"/></svg>
<svg class="a" style="left:903px;top:1333px" width="12" height="8" viewBox="0 0 12 8"><path d="M1.5 6.5L6 2l4.5 4.5" stroke="#fff" stroke-width="1.8" fill="none"/></svg>
<div class="a" style="left:715px;top:1360px;width:300px;text-align:center;font:bold 15.3px 'Liberation Sans';color:#fff;white-space:nowrap">Чат</div>
<svg class="a" style="left:976px;top:1322px" width="36" height="32" viewBox="0 0 36 32"><path d="M18 29.5C9 24 2 18 2.5 10.5C3 5 7 2.5 10.5 2.5c3.5 0 6 2 7.5 5c1.5-3 4-5 7.5-5c3.5 0 7.5 2.5 8 8C34 18 27 24 18 29.5z" stroke="#fff" stroke-width="1.9" fill="none" transform="rotate(-12 18 16)"/></svg>
<svg class="a" style="left:1039px;top:1333px" width="12" height="8" viewBox="0 0 12 8"><path d="M1.5 6.5L6 2l4.5 4.5" stroke="#fff" stroke-width="1.8" fill="none"/></svg>
<div class="a" style="left:843px;top:1360px;width:300px;text-align:center;font:bold 15.3px 'Liberation Sans';color:#fff;white-space:nowrap">Отреагировать</div>
<svg class="a" style="left:1110px;top:1323px" width="36" height="28" viewBox="0 0 36 28"><rect x="2" y="2" width="31" height="23.5" rx="3" stroke="#fff" stroke-width="1.9" fill="none"/><path d="M17.5 21V7.5M11.5 13l6-6l6 6" stroke="#fff" stroke-width="1.9" fill="none"/></svg>
<svg class="a" style="left:1171px;top:1333px" width="12" height="8" viewBox="0 0 12 8"><path d="M1.5 6.5L6 2l4.5 4.5" stroke="#fff" stroke-width="1.8" fill="none"/></svg>
<div class="a" style="left:977px;top:1360px;width:300px;text-align:center;font:bold 15.3px 'Liberation Sans';color:#fff;white-space:nowrap">Поделиться</div>
<svg class="a" style="left:1296px;top:1322px" width="28" height="30" viewBox="0 0 28 30"><path d="M14 2l11.5 3.5v9c0 6.5-5 11-11.5 13.5C7.5 25.5 2.5 21 2.5 14.5v-9z" stroke="#fff" stroke-width="1.9" fill="none"/><path d="M14 6v9H6.5v-7.5zM14 15h7.5c-0.5 5-3.5 8-7.5 10z" fill="#fff"/></svg>
<div class="a" style="left:1160px;top:1360px;width:300px;text-align:center;font:bold 15.3px 'Liberation Sans';color:#fff;white-space:nowrap">Инструменты организатора</div>
<svg class="a" style="left:1480px;top:1320px" width="34" height="34" viewBox="0 0 34 34"><circle cx="17" cy="17" r="15" stroke="#fff" stroke-width="1.9" fill="none"/><circle cx="10.5" cy="17" r="1.9" fill="#fff"/><circle cx="17" cy="17" r="1.9" fill="#fff"/><circle cx="23.5" cy="17" r="1.9" fill="#fff"/></svg>
<div class="a" style="left:1347px;top:1360px;width:300px;text-align:center;font:bold 15.3px 'Liberation Sans';color:#fff;white-space:nowrap">Дополнительно</div>
<svg class="a" style="left:1976px;top:1321px" width="36" height="32" viewBox="0 0 36 32"><path d="M10 2h16l8 14l-8 14H10L2 16z" stroke="#f0245a" stroke-width="2" fill="none"/><path d="M13 10.5l10 11M23 10.5l-10 11" stroke="#fff" stroke-width="3.6"/></svg>
<div class="a" style="left:1844px;top:1360px;width:300px;text-align:center;font:bold 15.3px 'Liberation Sans';color:#fff;white-space:nowrap">Завершение</div><div class="a" id="task"></div>
<svg class="a" style="left:21px;top:1401px" width="22" height="22" viewBox="0 0 22 22" fill="#fff"><path d="M0 3l9-1.2v8.7H0zM10 1.6L21.5 0v10.5H10zM0 11.5h9v8.7L0 19zM10 11.5h11.5V22L10 20.4z"/></svg>
<svg class="a" style="left:84px;top:1400px" width="26" height="25" viewBox="0 0 26 25" fill="none" stroke="#fff" stroke-width="1.4"><path d="M1 1v2.5h16V1M1 24v-2.5h16V24"/><rect x="1" y="7" width="16" height="11"/><path d="M24 0.5v24"/><rect x="22.5" y="10" width="3" height="3" fill="#fff"/></svg>
<svg class="a" style="left:151px;top:1401px" width="30" height="25" viewBox="0 0 30 25"><path d="M0 1.5c0-1 .5-1.5 1.5-1.5h8l2.5 2.5H28.5c1 0 1.5.5 1.5 1.5v19.5c0 1-.5 1.5-1.5 1.5H1.5C.5 24.5 0 24 0 23z" fill="#f4c542"/><path d="M0 4h30v2H0z" fill="#e6a817"/><path d="M6 24.5v-9.5c0-1 .5-1.5 1.5-1.5h15c1 0 1.5.5 1.5 1.5v9.5h-5v-5.5h-8v5.5z" fill="#3a8fe0"/></svg>
<svg class="a" style="left:217px;top:1397px" width="33" height="33" viewBox="0 0 33 33"><ellipse cx="16.5" cy="16.5" rx="15.5" ry="16" fill="#e5152b"/><ellipse cx="16.5" cy="16.5" rx="7" ry="12" fill="#1f1f1f"/></svg>
<svg class="a" style="left:283px;top:1396px" width="40" height="40" viewBox="0 0 40 40"><circle cx="17.5" cy="17.5" r="16" fill="#dd4a3a"/><path d="M17.5 17.5L3.6 25.5A16 16 0 0 0 17.5 33.5z" fill="#2f9d4f"/><path d="M17.5 17.5L3.6 25.5A16 16 0 0 1 1.5 17.5A16 16 0 0 1 9.5 3.6z" fill="#2f9d4f"/><path d="M17.5 17.5L31.4 9.5A16 16 0 0 1 17.5 33.5z" fill="#f6c027"/><circle cx="17.5" cy="17.5" r="7" fill="#fff"/><circle cx="17.5" cy="17.5" r="5.3" fill="#3c7ee8"/><circle cx="28" cy="27.5" r="9" fill="#f06a12"/><text x="28" y="32" text-anchor="middle" font-family="Liberation Sans" font-size="12" fill="#fff">B</text></svg>
<div class="a" style="left:273px;top:1437px;width:56px;height:3px;background:#76b9ed"></div>
<div class="a" style="left:335px;top:1386px;width:66px;height:54px;background:#3a3a3a"></div>
<div class="a" style="left:335px;top:1437px;width:66px;height:3px;background:#76b9ed"></div>
<div class="a" style="left:351px;top:1396px;width:34px;height:34px;border-radius:50%;background:#0b5cff;font:bold 9px 'Liberation Sans';color:#fff;text-align:center;line-height:34px">zoom</div>
<svg class="a" style="left:1777px;top:1402px" width="20" height="20" viewBox="0 0 20 20"><path d="M2 9c3-5 12-5 16 0c-4 5-13 5-16 0z" fill="#76b900"/><circle cx="10" cy="9" r="2.5" fill="#2a2a2a"/></svg>
<svg class="a" style="left:1809px;top:1402px" width="20" height="20" viewBox="0 0 20 20"><circle cx="10" cy="10" r="8" fill="#5a9ae8"/><circle cx="10" cy="10" r="3.5" fill="#fff"/><circle cx="15" cy="15" r="3.5" fill="#e02030"/></svg>
<svg class="a" style="left:1839px;top:1402px" width="20" height="20" viewBox="0 0 20 20"><circle cx="10" cy="10" r="6.5" fill="none" stroke="#9a6ae8" stroke-width="2"/></svg>
<svg class="a" style="left:1870px;top:1402px" width="20" height="20" viewBox="0 0 20 20"><rect x="1" y="1" width="18" height="18" rx="2" fill="#e86a1a"/><path d="M6 14h8M7 5c0 3 3 3 3 6" stroke="#fff" stroke-width="1.5" fill="none"/></svg>
<svg class="a" style="left:1901px;top:1402px" width="20" height="20" viewBox="0 0 20 20"><path d="M2 3l16 14M18 3L2 17" stroke="#bbb" stroke-width="3"/><circle cx="10" cy="9" r="3" fill="#d0a020"/></svg>
<svg class="a" style="left:1932px;top:1402px" width="20" height="20" viewBox="0 0 20 20"><path d="M6 2l8 8l-6 8" stroke="#30b0e0" stroke-width="2" fill="none"/></svg>
<svg class="a" style="left:1963px;top:1402px" width="20" height="20" viewBox="0 0 20 20"><rect x="2" y="4" width="16" height="10" fill="none" stroke="#ddd" stroke-width="1.4"/><path d="M6 17h8M10 14v3" stroke="#ddd" stroke-width="1.4"/></svg>
<svg class="a" style="left:1994px;top:1402px" width="20" height="20" viewBox="0 0 20 20"><circle cx="10" cy="10" r="8" fill="#2a7ad8"/><path d="M10 3c3 3 4 8 1 14M4 8c4 2 9 2 13 0" stroke="#4ac04a" stroke-width="3" fill="none"/></svg>
<svg class="a" style="left:2025px;top:1402px" width="20" height="20" viewBox="0 0 20 20"><path d="M3 7h3l4-4v14l-4-4H3z" fill="none" stroke="#ddd" stroke-width="1.3"/><path d="M13 6c2 2 2 6 0 8M15.5 4c3 3 3 9 0 12" stroke="#999" stroke-width="1.3" fill="none"/></svg>
<svg class="a" style="left:2056px;top:1402px" width="20" height="20" viewBox="0 0 20 20"><circle cx="10" cy="10" r="9" fill="#f47a20"/><path d="M4 14l10-8M6 16l9-6" stroke="#fff" stroke-width="1.6"/></svg>
<svg class="a" style="left:2087px;top:1402px" width="20" height="20" viewBox="0 0 20 20"><rect x="2" y="6" width="16" height="9" rx="2" fill="#3a60c0"/><rect x="3" y="3" width="14" height="5" fill="#80c0e8"/></svg>
<svg class="a" style="left:2118px;top:1402px" width="20" height="20" viewBox="0 0 20 20"><path d="M10 1l8 3v6c0 5-4 8-8 9c-4-1-8-4-8-9V4z" fill="#fff"/><path d="M10 1v9H2V4z" fill="#222"/><circle cx="15" cy="15" r="4.5" fill="#2aa84a"/></svg>
<svg class="a" style="left:2149px;top:1402px" width="20" height="20" viewBox="0 0 20 20"><rect x="6.5" y="1" width="7" height="12" rx="3.5" fill="#eee"/><path d="M4 10c0 4 3 6 6 6s6-2 6-6M10 16v3M7 19h6" stroke="#eee" stroke-width="1.3" fill="none"/></svg>
<svg class="a" style="left:2180px;top:1402px" width="20" height="20" viewBox="0 0 20 20"><circle cx="10" cy="10" r="9" fill="#1a5ae0"/><text x="10" y="13" text-anchor="middle" font-family="Liberation Sans" font-size="9" fill="#fff">zm</text></svg>
<svg class="a" style="left:2211px;top:1402px" width="20" height="20" viewBox="0 0 20 20"><circle cx="10" cy="10" r="9" fill="#2a7ad8"/><path d="M5 13l5-8l5 8z" stroke="#fff" stroke-width="1.4" fill="none"/></svg>
<svg class="a" style="left:2242px;top:1402px" width="20" height="20" viewBox="0 0 20 20"><rect x="3" y="6" width="11" height="9" rx="2" fill="none" stroke="#ddd" stroke-width="1.3"/><path d="M14 9l4-2v7l-4-2" stroke="#ddd" stroke-width="1.3" fill="none"/></svg>
<svg class="a" style="left:2304px;top:1403px" width="35" height="20" viewBox="0 0 35 20" fill="none" stroke="#fff" stroke-width="1.3"><rect x="1" y="1" width="33" height="18" rx="1"/><path d="M5 6h25M5 10h25M5 14h4M11 14h13M26 14h4" stroke-dasharray="1.5 1.5"/></svg>
<div class="a" style="left:2352px;top:1403px;font:17px 'Liberation Sans';color:#fff">РУС</div>
<div class="a" style="left:2390px;top:1393px;width:100px;text-align:center;font:16.5px 'Liberation Sans';color:#fff">10:37</div>
<div class="a" style="left:2390px;top:1417px;width:100px;text-align:center;font:16.5px 'Liberation Sans';color:#fff">27.03.2026</div>
<svg class="a" style="left:2503px;top:1402px" width="26" height="24" viewBox="0 0 26 24"><path d="M1 1h22v16H11l-5 5v-5H1z" fill="#fff"/><path d="M5 6h13M5 10h10" stroke="#333" stroke-width="1.2"/><circle cx="19" cy="16" r="4.5" fill="#fff" stroke="#333" stroke-width="1.2"/></svg>
<div class="a" style="left:2553px;top:1386px;width:2px;height:54px;background:#5a5a5a"></div><div class="a" id="panel"></div>
<div class="a" style="left:2078px;top:70px;width:473px;height:60px;background:#1f2022;border-radius:11px 11px 0 0"></div>
<div class="a" style="left:2218px;top:90px;font:bold 18px 'Liberation Sans';color:#fff">Участники (9)</div>
<svg class="a" style="left:2478px;top:89px" width="21" height="21" viewBox="0 0 21 21" fill="none" stroke="#bdbdbd" stroke-width="1.7"><path d="M9 2.5H5.5c-2 0-3 1-3 3v10c0 2 1 3 3 3h10c2 0 3-1 3-3V12M12 2.5h6.5V9M18.5 2.5l-8 8"/></svg>
<svg class="a" style="left:2517px;top:92px" width="16" height="16" viewBox="0 0 16 16" stroke="#c4c4c4" stroke-width="1.6"><path d="M1 1l14 14M15 1L1 15"/></svg>
<div class="a" style="left:2102px;top:144px;width:425px;height:43px;border:1.6px solid #5c5c5c;border-radius:14px"></div>
<svg class="a" style="left:2117px;top:157px" width="18" height="18" viewBox="0 0 18 18" fill="none" stroke="#9a9a9a" stroke-width="1.6"><circle cx="7.5" cy="7.5" r="5.8"/><path d="M11.8 11.8l4.5 4.5"/></svg>
<div class="a" style="left:2139px;top:156px;font:18px 'Liberation Sans';color:#8f8f8f">Найти участника</div>
<svg class="a" style="left:2099px;top:199px" width="38" height="38" viewBox="0 0 38 38"><defs><clipPath id="avvs"><rect width="38" height="38" rx="9"/></clipPath></defs><g clip-path="url(#avvs)" filter="url(#bl2)"><rect width="38" height="38" fill="#7ea860"/><rect x="24" width="14" height="38" fill="#5a7a48"/><path d="M4 38c2-9 8-12 15-12s13 3 15 12z" fill="#7cc2ea"/><ellipse cx="19" cy="17" rx="7" ry="9" fill="#c89e88"/><path d="M12 13c0-6 4-8 7-8s7 2 7 8c-3-3-11-3-14 0z" fill="#2a2624"/></g></svg>
<div class="a" style="left:2152px;top:209px;font:17.2px 'Liberation Sans';color:#fff;white-space:nowrap">Володимир Стефан...&nbsp; (Организатор, я)</div>
<svg class="a" style="left:2474px;top:206px" width="23" height="23" viewBox="0 0 23 23" fill="none" stroke="#e05a55" stroke-width="1.5"><rect x="8.5" y="2.5" width="6" height="11" rx="3"/><path d="M5.5 10.5c0 3.5 2.7 6 6 6s6-2.5 6-6M11.5 16.5v4M8 20.5h7"/><path d="M1.5 22L21.5 1"/></svg>
<svg class="a" style="left:2506px;top:206px" width="24" height="23" viewBox="0 0 24 23" fill="none" stroke="#9c9c9c" stroke-width="1.5"><rect x="1" y="5" width="15" height="13" rx="2.5"/><path d="M16 10l6-4v11l-6-4"/></svg>
<svg class="a" style="left:2099px;top:254px" width="38" height="38" viewBox="0 0 38 38"><defs><clipPath id="avsv"><rect width="38" height="38" rx="9"/></clipPath></defs><g clip-path="url(#avsv)" filter="url(#bl2)"><rect width="38" height="38" fill="#c8b494"/><rect x="0" y="26" width="8" height="12" fill="#333"/><path d="M4 38c2-10 8-13 15-13s13 3 15 13z" fill="#eceef2"/><ellipse cx="19" cy="16" rx="6" ry="8" fill="#b88a74"/><path d="M13 12c0-5 3-7 6-7s6 2 6 7c-3-2-9-2-12 0z" fill="#1a1a1a"/><rect x="26" y="30" width="12" height="8" fill="#222"/></g></svg>
<div class="a" style="left:2152px;top:264px;font:18.2px 'Liberation Sans';color:#fff;white-space:nowrap">Сергій Воронін</div>
<svg class="a" style="left:2443px;top:263px" width="23" height="18" viewBox="0 0 23 18" fill="none" stroke="#1fd67c" stroke-width="1.6"><rect x="1" y="1" width="21" height="16" rx="2.5"/><path d="M11.5 13.5V5M7.5 9l4-4l4 4"/></svg>
<svg class="a" style="left:2474px;top:261px" width="23" height="23" viewBox="0 0 23 23" fill="none" stroke="#e05a55" stroke-width="1.5"><rect x="8.5" y="2.5" width="6" height="11" rx="3"/><path d="M5.5 10.5c0 3.5 2.7 6 6 6s6-2.5 6-6M11.5 16.5v4M8 20.5h7"/><path d="M1.5 22L21.5 1"/></svg>
<svg class="a" style="left:2506px;top:261px" width="24" height="23" viewBox="0 0 24 23" fill="none" stroke="#9c9c9c" stroke-width="1.5"><rect x="1" y="5" width="15" height="13" rx="2.5"/><path d="M16 10l6-4v11l-6-4"/></svg>
<div class="a" style="left:2099px;top:309px;width:38px;height:38px;border-radius:9px;background:#c9392b;font:bold 17px 'Liberation Sans';color:#fff;text-align:center;line-height:38px">н</div>
<div class="a" style="left:2152px;top:319px;font:18.2px 'Liberation Sans';color:#fff;white-space:nowrap">настя</div>
<svg class="a" style="left:2474px;top:316px" width="23" height="23" viewBox="0 0 23 23" fill="none" stroke="#a0a0a0" stroke-width="1.5"><rect x="8.5" y="1.5" width="6" height="12" rx="3" fill="#a0a0a0"/><path d="M5.5 10.5c0 3.5 2.7 6 6 6s6-2.5 6-6M11.5 16.5v4M8 20.5h7"/></svg>
<svg class="a" style="left:2506px;top:316px" width="24" height="23" viewBox="0 0 24 23" fill="none" stroke="#9c9c9c" stroke-width="1.5"><rect x="1" y="5" width="15" height="13" rx="2.5"/><path d="M16 10l6-4v11l-6-4"/></svg>
<svg class="a" style="left:2099px;top:364px" width="38" height="38" viewBox="0 0 38 38"><defs><clipPath id="avab"><rect width="38" height="38" rx="9"/></clipPath></defs><g clip-path="url(#avab)" filter="url(#bl2)"><rect width="38" height="38" fill="#ece0b8"/><rect x="3" y="8" width="10" height="7" fill="#a08040"/><path d="M3 38c2-10 8-13 16-13s14 3 16 13z" fill="#6a7890"/><path d="M15 38l4-10l4 10z" fill="#9cc0c8"/><ellipse cx="19" cy="17" rx="7" ry="9" fill="#caa088"/><path d="M12 13c0-5 4-7 7-7s7 2 7 7c-3-2-11-2-14 0z" fill="#707070"/></g></svg>
<div class="a" style="left:2152px;top:374px;font:18.2px 'Liberation Sans';color:#fff;white-space:nowrap">Andrii Babenko</div>
<svg class="a" style="left:2474px;top:371px" width="23" height="23" viewBox="0 0 23 23" fill="none" stroke="#e05a55" stroke-width="1.5"><rect x="8.5" y="2.5" width="6" height="11" rx="3"/><path d="M5.5 10.5c0 3.5 2.7 6 6 6s6-2.5 6-6M11.5 16.5v4M8 20.5h7"/><path d="M1.5 22L21.5 1"/></svg>
<svg class="a" style="left:2506px;top:371px" width="24" height="23" viewBox="0 0 24 23" fill="none" stroke="#e05a55" stroke-width="1.5"><rect x="1" y="5" width="15" height="13" rx="2.5"/><path d="M16 10l6-4v11l-6-4"/><path d="M1 22.5L22.5 1"/></svg>
<div class="a" style="left:2099px;top:419px;width:38px;height:38px;border-radius:9px;background:#f29c17;font:bold 21px 'Liberation Sans';color:#fff;text-align:center;line-height:38px">A</div>
<div class="a" style="left:2152px;top:429px;font:18.2px 'Liberation Sans';color:#fff;white-space:nowrap">Андрій Євтушенко</div>
<svg class="a" style="left:2474px;top:426px" width="23" height="23" viewBox="0 0 23 23" fill="none" stroke="#e05a55" stroke-width="1.5"><rect x="8.5" y="2.5" width="6" height="11" rx="3"/><path d="M5.5 10.5c0 3.5 2.7 6 6 6s6-2.5 6-6M11.5 16.5v4M8 20.5h7"/><path d="M1.5 22L21.5 1"/></svg>
<svg class="a" style="left:2506px;top:426px" width="24" height="23" viewBox="0 0 24 23" fill="none" stroke="#e05a55" stroke-width="1.5"><rect x="1" y="5" width="15" height="13" rx="2.5"/><path d="M16 10l6-4v11l-6-4"/><path d="M1 22.5L22.5 1"/></svg>
<div class="a" style="left:2099px;top:474px;width:38px;height:38px;border-radius:9px;background:#5b3f34;font:normal 30px 'Liberation Sans';color:#fff;text-align:center;line-height:38px">A</div>
<div class="a" style="left:2152px;top:484px;font:18.2px 'Liberation Sans';color:#fff;white-space:nowrap">Артур Воронько 211-6км-д25</div>
<svg class="a" style="left:2474px;top:481px" width="23" height="23" viewBox="0 0 23 23" fill="none" stroke="#e05a55" stroke-width="1.5"><rect x="8.5" y="2.5" width="6" height="11" rx="3"/><path d="M5.5 10.5c0 3.5 2.7 6 6 6s6-2.5 6-6M11.5 16.5v4M8 20.5h7"/><path d="M1.5 22L21.5 1"/></svg>
<svg class="a" style="left:2506px;top:481px" width="24" height="23" viewBox="0 0 24 23" fill="none" stroke="#e05a55" stroke-width="1.5"><rect x="1" y="5" width="15" height="13" rx="2.5"/><path d="M16 10l6-4v11l-6-4"/><path d="M1 22.5L22.5 1"/></svg>
<div class="a" style="left:2099px;top:529px;width:38px;height:38px;border-radius:9px;background:#7a1fa6;font:normal 28px 'Liberation Sans';color:#fff;text-align:center;line-height:38px">V</div>
<div class="a" style="left:2152px;top:539px;font:18.2px 'Liberation Sans';color:#fff;white-space:nowrap">Віктор&nbsp; Косолапов</div>
<svg class="a" style="left:2474px;top:536px" width="23" height="23" viewBox="0 0 23 23" fill="none" stroke="#e05a55" stroke-width="1.5"><rect x="8.5" y="2.5" width="6" height="11" rx="3"/><path d="M5.5 10.5c0 3.5 2.7 6 6 6s6-2.5 6-6M11.5 16.5v4M8 20.5h7"/><path d="M1.5 22L21.5 1"/></svg>
<svg class="a" style="left:2506px;top:536px" width="24" height="23" viewBox="0 0 24 23" fill="none" stroke="#e05a55" stroke-width="1.5"><rect x="1" y="5" width="15" height="13" rx="2.5"/><path d="M16 10l6-4v11l-6-4"/><path d="M1 22.5L22.5 1"/></svg>
<svg class="a" style="left:2099px;top:584px" width="38" height="38" viewBox="0 0 38 38"><defs><clipPath id="avip"><rect width="38" height="38" rx="9"/></clipPath></defs><g clip-path="url(#avip)" filter="url(#bl2)"><rect width="38" height="38" fill="#d8d8dc"/><rect width="10" height="38" fill="#a8a8a8"/><path d="M2 38c2-10 8-14 17-14s15 4 17 14z" fill="#1c1c1e"/><ellipse cx="18" cy="16" rx="8" ry="10" fill="#c69c88"/><path d="M10 12c0-5 4-8 8-8s8 3 8 8c-3-2-13-2-16 0z" fill="#5a5a5a"/><ellipse cx="23" cy="31" rx="5" ry="4" fill="#d0a890"/></g></svg>
<div class="a" style="left:2152px;top:594px;font:18.2px 'Liberation Sans';color:#fff;white-space:nowrap">Ігор Пімонов</div>
<svg class="a" style="left:2474px;top:591px" width="23" height="23" viewBox="0 0 23 23" fill="none" stroke="#e05a55" stroke-width="1.5"><rect x="8.5" y="2.5" width="6" height="11" rx="3"/><path d="M5.5 10.5c0 3.5 2.7 6 6 6s6-2.5 6-6M11.5 16.5v4M8 20.5h7"/><path d="M1.5 22L21.5 1"/></svg>
<svg class="a" style="left:2506px;top:591px" width="24" height="23" viewBox="0 0 24 23" fill="none" stroke="#e05a55" stroke-width="1.5"><rect x="1" y="5" width="15" height="13" rx="2.5"/><path d="M16 10l6-4v11l-6-4"/><path d="M1 22.5L22.5 1"/></svg>
<svg class="a" style="left:2099px;top:639px" width="38" height="38" viewBox="0 0 38 38"><defs><clipPath id="avmm"><rect width="38" height="38" rx="9"/></clipPath></defs><g clip-path="url(#avmm)" filter="url(#bl2)"><rect width="38" height="38" fill="#c2def0"/><path d="M5 0h4l1 12h-3z" fill="#f0c020"/><path d="M2 0h3l1 8h-3z" fill="#3a70c0"/><rect x="12" width="1.5" height="38" fill="#aaa"/><path d="M14 38c2-8 8-10 14-10s10 2 12 10z" fill="#4a5a66"/><ellipse cx="28" cy="23" rx="9" ry="11" fill="#b88a74"/><path d="M18 17c0-7 5-10 10-10s10 3 10 10c-4-2-16-2-20 0z" fill="#1e1e24"/></g></svg>
<div class="a" style="left:2152px;top:649px;font:18.2px 'Liberation Sans';color:#fff;white-space:nowrap">Мариновський Микола&nbsp; М45-22</div>
<svg class="a" style="left:2474px;top:646px" width="23" height="23" viewBox="0 0 23 23" fill="none" stroke="#e05a55" stroke-width="1.5"><rect x="8.5" y="2.5" width="6" height="11" rx="3"/><path d="M5.5 10.5c0 3.5 2.7 6 6 6s6-2.5 6-6M11.5 16.5v4M8 20.5h7"/><path d="M1.5 22L21.5 1"/></svg>
<svg class="a" style="left:2506px;top:646px" width="24" height="23" viewBox="0 0 24 23" fill="none" stroke="#e05a55" stroke-width="1.5"><rect x="1" y="5" width="15" height="13" rx="2.5"/><path d="M16 10l6-4v11l-6-4"/><path d="M1 22.5L22.5 1"/></svg>
<div class="a" style="left:2160px;top:140px;width:400px;height:120px;background:rgba(3,3,3,0.93)"></div>
<div class="a" style="left:2160px;top:140px;width:6px;height:120px;background:#7cbd0b"></div>
<svg class="a" style="left:2202px;top:168px" width="64" height="64" viewBox="0 0 64 64"><rect width="64" height="64" fill="#141414"/><rect x="0" y="2" width="8" height="9" fill="#8a8070"/><rect x="8" y="2" width="8" height="9" fill="#6a6050"/><rect x="16" y="2" width="6" height="9" fill="#807860"/><rect x="24" y="4" width="3" height="5" fill="#7a24b0"/><rect x="37" y="4" width="3" height="5" fill="#c8dce8"/><circle cx="62" cy="6" r="1.5" fill="#3a7ad8"/><rect x="0" y="12" width="54" height="47" fill="#f2f2f2"/><rect x="2" y="14" width="50" height="2" fill="#9a9a9a"/><rect x="8" y="19" width="20" height="4" fill="#c8c8c8"/><rect x="1" y="24" width="52" height="4" fill="#d6d6d6"/><rect x="5" y="29" width="34" height="6" fill="#505050"/><ellipse cx="12" cy="38" rx="5" ry="3" fill="#d0d0d0"/><ellipse cx="27" cy="38" rx="5" ry="3" fill="#d8d8d8"/><ellipse cx="45" cy="35" rx="6" ry="5" fill="#b8b8b0"/><rect x="1" y="43" width="52" height="2" fill="#cfcfcf"/><rect x="6" y="46" width="10" height="13" fill="#e4e4e4"/><rect x="22" y="46" width="10" height="13" fill="#e4e4e4"/><rect x="38" y="46" width="10" height="13" fill="#e6e6e6"/><path d="M19 45v14M35 45v14" stroke="#9a9a9a" stroke-width="0.8"/><rect x="54" y="12" width="10" height="47" fill="#050505"/></svg>
<div class="a" style="left:2302px;top:188px;font:19.5px 'Liberation Sans';color:#ececec;white-space:nowrap">Снимок экрана сохранен</div>
<div class="a btn" style="left:2098px;top:1326px;width:124px">Пригласить</div>
<div class="a btn" style="left:2242px;top:1326px;width:237px">Выключить звук для всех</div>
<div class="a btn" style="left:2499px;top:1326px;width:31px;font-weight:bold;letter-spacing:1px;line-height:24px">&middot;&middot;&middot;</div></body></html>
